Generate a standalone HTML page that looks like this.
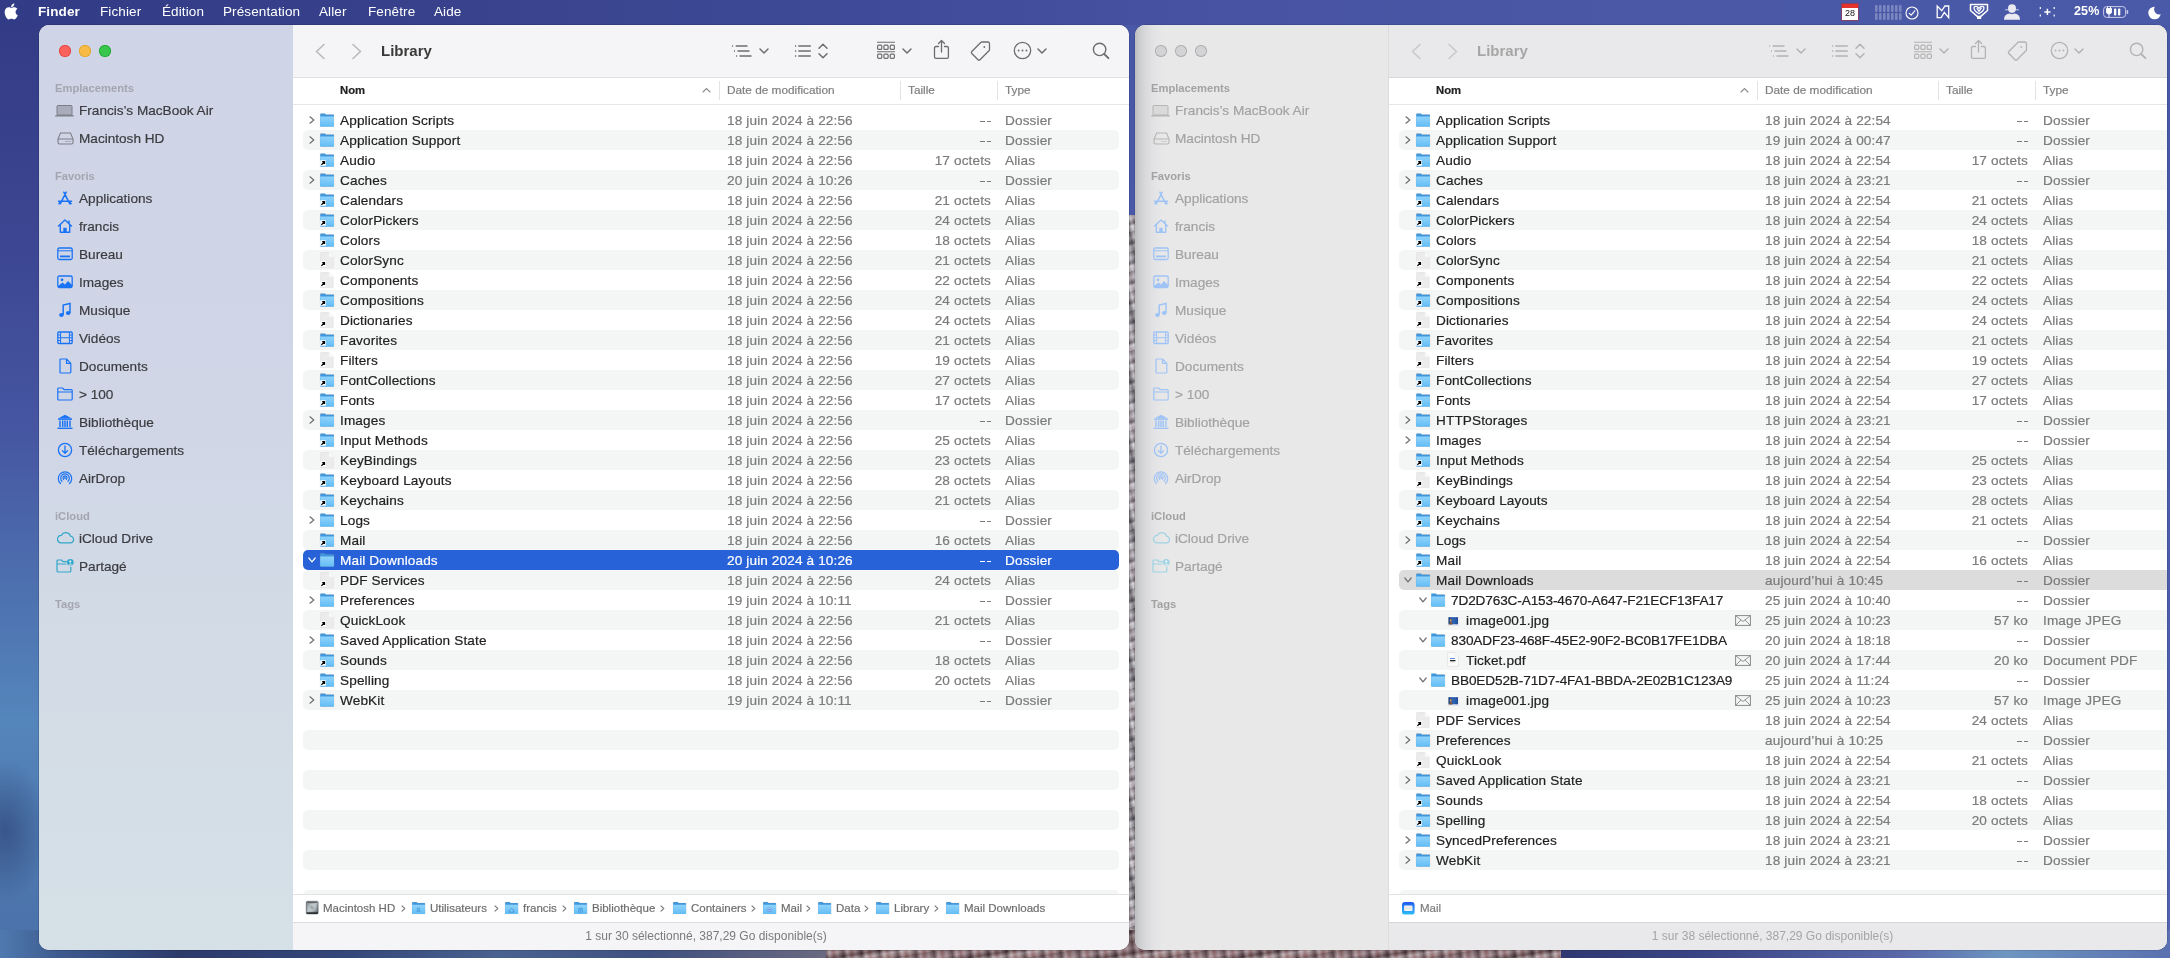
<!DOCTYPE html><html><head><meta charset="utf-8"><title>Finder</title><style>
*{margin:0;padding:0;box-sizing:border-box}
html,body{width:2170px;height:958px;overflow:hidden}
body{position:relative;font-family:"Liberation Sans", sans-serif;background:#4a6aa0;-webkit-font-smoothing:antialiased}
#root{position:absolute;left:0;top:0;width:2170px;height:958px;will-change:transform}
.t,.si,.pb,.hd{-webkit-text-stroke:0.2px currentColor}
.abs{position:absolute}
.ic{position:absolute;overflow:visible}
.t{position:absolute;height:20px;line-height:21.5px;font-size:13.6px;letter-spacing:0.13px;white-space:nowrap}
.r{text-align:right}
.stripe{position:absolute;height:20px;background:#f4f5f5}
.menu{position:absolute;left:0;top:0;width:2170px;height:25px;background:linear-gradient(90deg,#323c86 0%,#38428c 20%,#3f4b98 40%,#4753a2 55%,#4a58a6 75%,#4a5aa8 100%)}
.mi{position:absolute;top:0;height:23px;line-height:23px;font-size:13.5px;letter-spacing:0.12px;color:#fff}
.win{position:absolute;border-radius:10px;overflow:hidden}
.side{position:absolute;left:0;top:0;bottom:0}
.sh{position:absolute;font-size:11.2px;font-weight:bold;height:14px;line-height:14px}
.si{position:absolute;font-size:13.6px;height:20px;line-height:20px;white-space:nowrap}
.hd{position:absolute;font-size:11.8px;height:16px;line-height:16px;white-space:nowrap}
.pb{position:absolute;font-size:11.5px;height:16px;line-height:16px;white-space:nowrap;color:#6e6e6e}
</style></head><body><div id="root">
<svg width="0" height="0" style="position:absolute">
<defs>
<linearGradient id="fbody" x1="0" y1="0" x2="0" y2="1">
 <stop offset="0" stop-color="#8fd3fb"/><stop offset="1" stop-color="#62bdf5"/>
</linearGradient>
<linearGradient id="hdg" x1="0" y1="0" x2="0" y2="1">
 <stop offset="0" stop-color="#9a9a9a"/><stop offset="1" stop-color="#3a3a3a"/>
</linearGradient>
<symbol id="folder" viewBox="0 0 16 14">
 <path d="M1.2 1.2 Q1.2 0.5 1.9 0.5 H5.6 Q6.1 0.5 6.4 0.9 L6.9 1.6 H14.3 Q15 1.6 15 2.3 V12.8 Q15 13.5 14.3 13.5 H1.9 Q1.2 13.5 1.2 12.8 Z" fill="#3f97de" stroke="#b99a8a" stroke-opacity="0.35" stroke-width="0.5"/>
 <path d="M1.2 3.6 H15 V12.8 Q15 13.5 14.3 13.5 H1.9 Q1.2 13.5 1.2 12.8 Z" fill="url(#fbody)"/>
</symbol>
<symbol id="alias" viewBox="0 0 6 6">
 <rect x="0.2" y="0.2" width="5.6" height="5.6" fill="#fff" rx="0.4"/>
 <path d="M1.4 4.8 L4.2 2 M2.2 1.6 H4.5 V3.9" stroke="#000" stroke-width="1.2" fill="none"/>
</symbol>
<symbol id="doc" viewBox="0 0 16 18">
 <path d="M1.6 1.9 Q1.6 1.6 1.9 1.6 H10 L14.2 5.8 V16.3 Q14.2 16.6 13.9 16.6 H1.9 Q1.6 16.6 1.6 16.3 Z" fill="#ececec" stroke="#dedede" stroke-width="0.6"/>
 <path d="M10 1.6 V5 Q10 5.8 10.8 5.8 H14.2 Z" fill="#fbfbfb"/>
</symbol>
<symbol id="chev" viewBox="0 0 6 8">
 <path d="M1 0.8 L4.8 4 L1 7.2" fill="none" stroke="#6f6f6f" stroke-width="1.2" stroke-linecap="round" stroke-linejoin="round"/>
</symbol>
<symbol id="chevd" viewBox="0 0 8 6">
 <path d="M0.8 1 L4 4.8 L7.2 1" fill="none" stroke="#6f6f6f" stroke-width="1.2" stroke-linecap="round" stroke-linejoin="round"/>
</symbol>
<symbol id="envelope" viewBox="0 0 16 11">
 <rect x="0.6" y="0.6" width="14.8" height="9.8" fill="none" stroke="#8a8a8a" stroke-width="1"/>
 <path d="M0.6 0.6 L8 6.5 L15.4 0.6 M0.6 10.4 L6 5 M15.4 10.4 L10 5" fill="none" stroke="#8a8a8a" stroke-width="0.9"/>
</symbol>
<symbol id="imgicon" viewBox="0 0 13 10.5">
 <rect x="0.3" y="0.6" width="12.4" height="9.6" rx="0.6" fill="#9a9a9a" opacity="0.35"/>
 <rect x="0.3" y="0.2" width="12.4" height="9.6" rx="0.6" fill="#fff"/>
 <linearGradient id="imgg" x1="0" y1="0" x2="1" y2="0"><stop offset="0" stop-color="#1c3d7a"/><stop offset="0.5" stop-color="#2d66b8"/><stop offset="1" stop-color="#1f4d95"/></linearGradient>
 <rect x="1.4" y="1.2" width="10.2" height="7.6" fill="url(#imgg)"/>
 <ellipse cx="3.9" cy="4.6" rx="1" ry="1.5" fill="#c98a5a"/>
 <path d="M2 8.8 Q2.3 6.3 3.9 6.1 Q5.6 6.3 5.9 8.8 Z" fill="#7a5a40"/>
</symbol>
<symbol id="pdficon" viewBox="0 0 12 15">
 <path d="M0.6 0.6 H8 L11.4 4 V14.4 H0.6 Z" fill="#fbfbfb" stroke="#dcdcdc" stroke-width="0.6"/>
 <path d="M8 0.6 V4 H11.4" fill="#fff" stroke="#dcdcdc" stroke-width="0.5"/>
 <rect x="3" y="6" width="5" height="1" fill="#5a8de0"/>
 <rect x="3" y="8" width="5.5" height="1.2" fill="#222"/>
 <rect x="3.5" y="9.6" width="4" height="0.6" fill="#999"/>
</symbol>
</defs>
</svg>
<div class="abs" style="left:0;top:0;width:2170px;height:958px;background:linear-gradient(180deg,#323a84 0%,#3c4692 25%,#4656a2 45%,#4f76b2 65%,#5485bb 75%,#4a70a8 100%)"></div><div class="abs" style="left:-40px;top:760px;width:90px;height:140px;border-radius:50%;background:radial-gradient(closest-side,rgba(30,40,90,0.45),rgba(30,40,90,0))"></div><div class="abs" style="left:1090px;top:0;width:1080px;height:958px;background:linear-gradient(180deg,#4858a6 0%,#4d5caa 50%,#5363b0 100%)"></div><div class="abs" style="left:1100px;top:215px;width:60px;height:743px;background:repeating-linear-gradient(77deg,rgba(40,35,40,0.45) 0px,rgba(235,235,240,0.35) 4px,rgba(110,80,80,0.25) 7px,rgba(220,218,225,0.3) 11px,rgba(30,28,32,0.4) 16px),repeating-linear-gradient(-17deg,#a8a6ad 0px,#d6d4da 5px,#5d5660 8px,#c2bec6 13px,#7a7078 19px)"></div><div class="abs" style="left:0;top:930px;width:830px;height:28px;background:linear-gradient(90deg,#4f7ab0 0,#3d5a8e 60px,#2c3a6a 180px,#34477a 350px,#4a6290 500px,#3f5080 650px,#6b6a80 830px)"></div><div class="abs" style="left:1555px;top:930px;width:615px;height:28px;background:linear-gradient(90deg,#2e3770 0,#3a4585 150px,#5a68aa 350px,#6d96c0 450px,#5a70b0 615px)"></div><div class="abs" style="left:826px;top:930px;width:735px;height:28px;background:repeating-linear-gradient(83deg,rgba(40,25,30,0.4) 0px,rgba(225,215,220,0.35) 4px,rgba(130,80,80,0.35) 8px,rgba(200,190,195,0.3) 12px,rgba(35,25,30,0.45) 18px),repeating-linear-gradient(-9deg,#8a6a6c 0px,#b9a9ac 5px,#4e383c 9px,#a48c92 14px,#6e5458 21px)"></div><div class="menu"></div><div class="win" style="left:39px;top:25px;width:1090px;height:925px;background:#fff;box-shadow:0 0 0 0.5px rgba(0,0,0,0.25)"><div class="abs" style="left:0;top:0;width:254px;height:100%;background:linear-gradient(180deg,#cfd4e6 0%,#d0d6e6 45%,#d3dce6 70%,#d5e0e7 100%)"></div><div class="abs" style="left:254px;top:0;width:836px;height:53px;background:#f5f5f7;border-bottom:1px solid #e0e0e0"></div><div class="abs" style="left:254px;top:78.5px;width:836px;height:1px;background:#e6e6e6"></div></div><div class="abs" style="left:59px;top:45px;width:12px;height:12px;border-radius:50%;background:#fa625b;box-shadow:inset 0 0 0 0.8px #e0443e"></div><div class="abs" style="left:79px;top:45px;width:12px;height:12px;border-radius:50%;background:#f8bb45;box-shadow:inset 0 0 0 0.8px #dea123"></div><div class="abs" style="left:99px;top:45px;width:12px;height:12px;border-radius:50%;background:#38c74c;box-shadow:inset 0 0 0 0.8px #1ea52e"></div><svg class="ic" style="left:55px;top:104px" width="19" height="13" viewBox="0 0 19 13"><rect x="2" y="1.5" width="15" height="9.5" rx="0.8" fill="#a9acba" stroke="#7c7e86" stroke-width="1"/><path d="M0.3 11.8 H18.7" stroke="#7c7e86" stroke-width="1.4"/></svg><svg class="ic" style="left:57px;top:132px" width="17" height="13" viewBox="0 0 17 13"><path d="M3.5 1 H13.5 L16 7 V10.5 Q16 12 14.5 12 H2.5 Q1 12 1 10.5 V7 Z" fill="none" stroke="#7c7e86" stroke-width="1.1"/><path d="M1 7 H16" stroke="#7c7e86" stroke-width="1"/><circle cx="9" cy="9.5" r="0.6" fill="#7c7e86"/><circle cx="11" cy="9.5" r="0.6" fill="#7c7e86"/><circle cx="13" cy="9.5" r="0.6" fill="#7c7e86"/></svg><svg class="ic" style="left:57px;top:191px" width="16" height="15" viewBox="0 0 16 15"><path d="M9.2 1.2 L3.2 12.8 M6.8 1.2 L12.8 12.8 M1.5 10.2 H14.5 M2 12.6 L3 11.6 M14 12.6 L13 11.6" fill="none" stroke="#1a73f5" stroke-width="1.5" stroke-linecap="round"/></svg><svg class="ic" style="left:57px;top:218px" width="16" height="16" viewBox="0 0 16 16"><path d="M1.5 8 L8 2 L14.5 8 M3.3 6.5 V14.3 H12.7 V6.5 M12 3 V5.5" fill="none" stroke="#1a73f5" stroke-width="1.4" stroke-linejoin="round" stroke-linecap="round"/><rect x="6.3" y="9.8" width="3.4" height="4.5" fill="#1a73f5"/></svg><svg class="ic" style="left:57px;top:247px" width="16" height="14" viewBox="0 0 16 14"><rect x="0.8" y="1" width="14.4" height="11.5" rx="1.5" fill="none" stroke="#1a73f5" stroke-width="1.3"/><path d="M0.8 3.8 H15.2" stroke="#1a73f5" stroke-width="1"/><rect x="3" y="8.5" width="10" height="1.8" fill="#1a73f5"/></svg><svg class="ic" style="left:57px;top:275px" width="16" height="14" viewBox="0 0 16 14"><rect x="0.8" y="1" width="14.4" height="11.5" rx="1.5" fill="none" stroke="#1a73f5" stroke-width="1.3"/><circle cx="5" cy="4.8" r="1.4" fill="#1a73f5"/><path d="M1 11 L5.5 7.5 L8 9.5 L11 6 L15 10 V12.5 H1 Z" fill="#1a73f5"/></svg><svg class="ic" style="left:58px;top:302px" width="14" height="16" viewBox="0 0 14 16"><path d="M5.2 13 V3 L12 1.5 V11" fill="none" stroke="#1a73f5" stroke-width="1.5"/><ellipse cx="3.4" cy="13" rx="2.3" ry="1.9" fill="#1a73f5"/><ellipse cx="10.2" cy="11" rx="2.3" ry="1.9" fill="#1a73f5"/></svg><svg class="ic" style="left:57px;top:331px" width="16" height="14" viewBox="0 0 16 14"><rect x="0.8" y="1" width="14.4" height="11.5" rx="1" fill="none" stroke="#1a73f5" stroke-width="1.3"/><path d="M3.6 1 V12.5 M12.4 1 V12.5 M3.6 6.75 H12.4 M0.8 4 H3.6 M0.8 6.75 H3.6 M0.8 9.5 H3.6 M12.4 4 H15.2 M12.4 6.75 H15.2 M12.4 9.5 H15.2" stroke="#1a73f5" stroke-width="1"/></svg><svg class="ic" style="left:59px;top:358px" width="13" height="16" viewBox="0 0 13 16"><path d="M1 2 Q1 1 2 1 H7.5 L11.8 5.3 V14 Q11.8 15 10.8 15 H2 Q1 15 1 14 Z M7.5 1 V5.3 H11.8" fill="none" stroke="#1a73f5" stroke-width="1.2" stroke-linejoin="round"/></svg><svg class="ic" style="left:57px;top:387px" width="16" height="14" viewBox="0 0 16 14"><path d="M0.8 2 Q0.8 1 1.8 1 H5.5 L7 2.6 H14.2 Q15.2 2.6 15.2 3.6 V12 Q15.2 13 14.2 13 H1.8 Q0.8 13 0.8 12 Z M0.8 5 H15.2" fill="none" stroke="#1a73f5" stroke-width="1.2" stroke-linejoin="round"/></svg><svg class="ic" style="left:57px;top:414px" width="16" height="16" viewBox="0 0 16 16"><path d="M8 0.8 L15 4.5 H1 Z" fill="#1a73f5"/><rect x="1" y="4.5" width="14" height="1.4" fill="#1a73f5"/><path d="M3 6.5 V13 M5.7 6.5 V13 M8 6.5 V13 M10.3 6.5 V13 M13 6.5 V13" stroke="#1a73f5" stroke-width="1.5"/><rect x="0.5" y="13.6" width="15" height="1.4" fill="#1a73f5"/></svg><svg class="ic" style="left:57px;top:442px" width="16" height="16" viewBox="0 0 16 16"><circle cx="8" cy="8" r="6.6" fill="none" stroke="#1a73f5" stroke-width="1.3"/><path d="M8 4 V11 M5.3 8.6 L8 11.3 L10.7 8.6" fill="none" stroke="#1a73f5" stroke-width="1.3" stroke-linecap="round" stroke-linejoin="round"/></svg><svg class="ic" style="left:57px;top:470px" width="16" height="16" viewBox="0 0 16 16"><path d="M3.5 13.5 A6.7 6.7 0 1 1 12.5 13.5 M5 11.3 A4.3 4.3 0 1 1 11 11.3 M6.6 9.3 A2 2 0 1 1 9.4 9.3" fill="none" stroke="#1a73f5" stroke-width="1.2" stroke-linecap="round"/><circle cx="8" cy="8" r="0.9" fill="#1a73f5"/></svg><svg class="ic" style="left:56px;top:531px" width="18" height="13" viewBox="0 0 18 13"><path d="M4.5 11.8 H14 A3.3 3.3 0 0 0 14.5 5.2 A4.8 4.8 0 0 0 5.5 4.3 A3.8 3.8 0 0 0 4.5 11.8 Z" fill="none" stroke="#33a7c9" stroke-width="1.2"/></svg><svg class="ic" style="left:56px;top:558px" width="18" height="15" viewBox="0 0 18 15"><path d="M10.8 3.6 H7 L5.5 2 H2 Q1 2 1 3 V13 Q1 14 2 14 H13.8 Q14.8 14 14.8 13 V8.8 M1 6 H10.5" fill="none" stroke="#33a7c9" stroke-width="1.2" stroke-linejoin="round"/><circle cx="14.3" cy="4.3" r="3.3" fill="#33a7c9"/><circle cx="14.3" cy="3.4" r="1" fill="#fff"/><path d="M12.6 6.5 Q14.3 4.6 16 6.5" fill="#fff"/></svg><div class="sh" style="left:55px;top:81px;color:#a3a6b0">Emplacements</div><div class="sh" style="left:55px;top:169px;color:#a3a6b0">Favoris</div><div class="sh" style="left:55px;top:509px;color:#a3a6b0">iCloud</div><div class="sh" style="left:55px;top:597px;color:#a3a6b0">Tags</div><div class="si" style="left:79px;top:101px;color:#3b3c40">Francis’s MacBook Air</div><div class="si" style="left:79px;top:129px;color:#3b3c40">Macintosh HD</div><div class="si" style="left:79px;top:189px;color:#3b3c40">Applications</div><div class="si" style="left:79px;top:217px;color:#3b3c40">francis</div><div class="si" style="left:79px;top:245px;color:#3b3c40">Bureau</div><div class="si" style="left:79px;top:273px;color:#3b3c40">Images</div><div class="si" style="left:79px;top:301px;color:#3b3c40">Musique</div><div class="si" style="left:79px;top:329px;color:#3b3c40">Vidéos</div><div class="si" style="left:79px;top:357px;color:#3b3c40">Documents</div><div class="si" style="left:79px;top:385px;color:#3b3c40">&gt; 100</div><div class="si" style="left:79px;top:413px;color:#3b3c40">Bibliothèque</div><div class="si" style="left:79px;top:441px;color:#3b3c40">Téléchargements</div><div class="si" style="left:79px;top:469px;color:#3b3c40">AirDrop</div><div class="si" style="left:79px;top:529px;color:#3b3c40">iCloud Drive</div><div class="si" style="left:79px;top:557px;color:#3b3c40">Partagé</div><svg class="ic" style="left:314px;top:43px" width="12" height="17" viewBox="0 0 12 17"><path d="M10 1.5 L2.5 8.5 L10 15.5" fill="none" stroke="#b9b9b9" stroke-width="1.6" stroke-linecap="round" stroke-linejoin="round"/></svg><svg class="ic" style="left:351px;top:43px" width="12" height="17" viewBox="0 0 12 17"><path d="M2 1.5 L9.5 8.5 L2 15.5" fill="none" stroke="#b9b9b9" stroke-width="1.6" stroke-linecap="round" stroke-linejoin="round"/></svg><div class="abs" style="left:381px;top:40px;height:22px;line-height:22px;font-size:15px;font-weight:bold;color:#3a3a3a">Library</div><svg class="ic" style="left:730px;top:44px" width="24" height="14" viewBox="0 0 24 14"><path d="M2 2 H3 M4 7 H5 M6 12 H7" stroke="#6d6d6d" stroke-width="1.5"/><path d="M5.7 2 H17.5 M7.5 7 H19.5 M9.5 12 H21.5" stroke="#6d6d6d" stroke-width="1.4"/></svg><svg class="ic" style="left:759px;top:48px" width="10" height="6" viewBox="0 0 10 6"><path d="M1 1 L5 5 L9 1" fill="none" stroke="#6d6d6d" stroke-width="1.5" stroke-linecap="round" stroke-linejoin="round"/></svg><svg class="ic" style="left:793px;top:44px" width="20" height="14" viewBox="0 0 20 14"><path d="M2 2 H3.2 M2 7 H3.2 M2 12 H3.2" stroke="#6d6d6d" stroke-width="1.5"/><path d="M5.3 2 H17.8 M5.3 7 H17.8 M5.3 12 H17.8" stroke="#6d6d6d" stroke-width="1.4"/></svg><svg class="ic" style="left:818px;top:43px" width="10" height="16" viewBox="0 0 10 16"><path d="M1 5.3 L5 1.3 L9 5.3 M1 10.7 L5 14.7 L9 10.7" fill="none" stroke="#6d6d6d" stroke-width="1.5" stroke-linecap="round" stroke-linejoin="round"/></svg><svg class="ic" style="left:876px;top:41px" width="20" height="19" viewBox="0 0 20 19"><path d="M1 1.2 H19 M1 10.7 H19" stroke="#6d6d6d" stroke-width="1.1"/><g fill="none" stroke="#6d6d6d" stroke-width="1.2"><rect x="1.6" y="4.2" width="4.2" height="4.2" rx="1"/><rect x="7.9" y="4.2" width="4.2" height="4.2" rx="1"/><rect x="14.2" y="4.2" width="4.2" height="4.2" rx="1"/><rect x="1.6" y="13.1" width="4.2" height="4.2" rx="1"/><rect x="7.9" y="13.1" width="4.2" height="4.2" rx="1"/><rect x="14.2" y="13.1" width="4.2" height="4.2" rx="1"/></g></svg><svg class="ic" style="left:902px;top:48px" width="10" height="6" viewBox="0 0 10 6"><path d="M1 1 L5 5 L9 1" fill="none" stroke="#6d6d6d" stroke-width="1.5" stroke-linecap="round" stroke-linejoin="round"/></svg><svg class="ic" style="left:933px;top:39px" width="17" height="21" viewBox="0 0 17 21"><path d="M5.5 7.5 H3 Q1.5 7.5 1.5 9 V18 Q1.5 19.4 3 19.4 H14 Q15.4 19.4 15.4 18 V9 Q15.4 7.5 14 7.5 H11.5" fill="none" stroke="#6d6d6d" stroke-width="1.3" stroke-linecap="round"/><path d="M8.5 13 V1.5 M5.5 4.5 L8.5 1.5 L11.5 4.5" fill="none" stroke="#6d6d6d" stroke-width="1.3" stroke-linecap="round" stroke-linejoin="round"/></svg><svg class="ic" style="left:970px;top:41px" width="21" height="21" viewBox="0 0 21 21"><path d="M1.8 10.5 L11 1.3 Q11.3 1 11.8 1 H17.8 Q19.5 1 19.5 2.7 V8.7 Q19.5 9.2 19.2 9.5 L10 18.7 Q9 19.7 8 18.7 L1.8 12.5 Q0.8 11.5 1.8 10.5 Z" fill="none" stroke="#6d6d6d" stroke-width="1.3" stroke-linejoin="round"/><circle cx="14.3" cy="6" r="0.9" fill="#6d6d6d"/></svg><svg class="ic" style="left:1013px;top:41px" width="19" height="19" viewBox="0 0 19 19"><circle cx="9.5" cy="9.5" r="8.2" fill="none" stroke="#6d6d6d" stroke-width="1.3"/><circle cx="5.6" cy="9.5" r="0.95" fill="#6d6d6d"/><circle cx="9.5" cy="9.5" r="0.95" fill="#6d6d6d"/><circle cx="13.4" cy="9.5" r="0.95" fill="#6d6d6d"/></svg><svg class="ic" style="left:1037px;top:48px" width="10" height="6" viewBox="0 0 10 6"><path d="M1 1 L5 5 L9 1" fill="none" stroke="#6d6d6d" stroke-width="1.5" stroke-linecap="round" stroke-linejoin="round"/></svg><svg class="ic" style="left:1092px;top:42px" width="18" height="18" viewBox="0 0 18 18"><circle cx="7.6" cy="7.4" r="6.2" fill="none" stroke="#6d6d6d" stroke-width="1.4"/><path d="M12.2 12 L16.4 16.2" stroke="#6d6d6d" stroke-width="1.9" stroke-linecap="round"/></svg><div class="hd" style="left:340px;top:82px;font-weight:bold;color:#222;font-size:11.3px">Nom</div><svg class="ic" style="left:702px;top:87px" width="9" height="6" viewBox="0 0 9 6"><path d="M1 5 L4.5 1.5 L8 5" fill="none" stroke="#8a8a8a" stroke-width="1.1" stroke-linecap="round"/></svg><div class="abs" style="left:719px;top:81px;width:1px;height:19px;background:#e3e3e3"></div><div class="abs" style="left:900px;top:81px;width:1px;height:19px;background:#e3e3e3"></div><div class="abs" style="left:997px;top:81px;width:1px;height:19px;background:#e3e3e3"></div><div class="hd" style="left:727px;top:82px;color:#7f7f7f">Date de modification</div><div class="hd" style="left:908px;top:82px;color:#7f7f7f">Taille</div><div class="hd" style="left:1005px;top:82px;color:#7f7f7f">Type</div><svg class="ic" style="left:309px;top:116px" width="6" height="8"><use href="#chev" /></svg><svg class="ic" style="left:319px;top:113px" width="16" height="14"><use href="#folder"/></svg><div class="t" style="left:340px;top:110px;color:#222">Application Scripts</div><div class="t" style="left:727px;top:110px;color:#7b7b7b">18 juin 2024 à 22:56</div><div class="abs" style="left:979.5px;top:120.6px;width:11.5px;height:1.3px;background:linear-gradient(90deg,#7b7b7b 0 4.6px,transparent 4.6px 6.8px,#7b7b7b 6.8px)"></div><div class="t" style="left:1005px;top:110px;color:#7b7b7b">Dossier</div><div class="stripe" style="left:303px;top:130px;width:816px;border-radius:5px"></div><svg class="ic" style="left:309px;top:136px" width="6" height="8"><use href="#chev" /></svg><svg class="ic" style="left:319px;top:133px" width="16" height="14"><use href="#folder"/></svg><div class="t" style="left:340px;top:130px;color:#222">Application Support</div><div class="t" style="left:727px;top:130px;color:#7b7b7b">18 juin 2024 à 22:56</div><div class="abs" style="left:979.5px;top:140.6px;width:11.5px;height:1.3px;background:linear-gradient(90deg,#7b7b7b 0 4.6px,transparent 4.6px 6.8px,#7b7b7b 6.8px)"></div><div class="t" style="left:1005px;top:130px;color:#7b7b7b">Dossier</div><svg class="ic" style="left:319px;top:153px" width="16" height="14"><use href="#folder"/></svg><svg class="ic" style="left:320px;top:160px" width="6" height="6"><use href="#alias"/></svg><div class="t" style="left:340px;top:150px;color:#222">Audio</div><div class="t" style="left:727px;top:150px;color:#7b7b7b">18 juin 2024 à 22:56</div><div class="t r" style="right:1179px;top:150px;color:#7b7b7b">17 octets</div><div class="t" style="left:1005px;top:150px;color:#7b7b7b">Alias</div><div class="stripe" style="left:303px;top:170px;width:816px;border-radius:5px"></div><svg class="ic" style="left:309px;top:176px" width="6" height="8"><use href="#chev" /></svg><svg class="ic" style="left:319px;top:173px" width="16" height="14"><use href="#folder"/></svg><div class="t" style="left:340px;top:170px;color:#222">Caches</div><div class="t" style="left:727px;top:170px;color:#7b7b7b">20 juin 2024 à 10:26</div><div class="abs" style="left:979.5px;top:180.6px;width:11.5px;height:1.3px;background:linear-gradient(90deg,#7b7b7b 0 4.6px,transparent 4.6px 6.8px,#7b7b7b 6.8px)"></div><div class="t" style="left:1005px;top:170px;color:#7b7b7b">Dossier</div><svg class="ic" style="left:319px;top:193px" width="16" height="14"><use href="#folder"/></svg><svg class="ic" style="left:320px;top:200px" width="6" height="6"><use href="#alias"/></svg><div class="t" style="left:340px;top:190px;color:#222">Calendars</div><div class="t" style="left:727px;top:190px;color:#7b7b7b">18 juin 2024 à 22:56</div><div class="t r" style="right:1179px;top:190px;color:#7b7b7b">21 octets</div><div class="t" style="left:1005px;top:190px;color:#7b7b7b">Alias</div><div class="stripe" style="left:303px;top:210px;width:816px;border-radius:5px"></div><svg class="ic" style="left:319px;top:213px" width="16" height="14"><use href="#folder"/></svg><svg class="ic" style="left:320px;top:220px" width="6" height="6"><use href="#alias"/></svg><div class="t" style="left:340px;top:210px;color:#222">ColorPickers</div><div class="t" style="left:727px;top:210px;color:#7b7b7b">18 juin 2024 à 22:56</div><div class="t r" style="right:1179px;top:210px;color:#7b7b7b">24 octets</div><div class="t" style="left:1005px;top:210px;color:#7b7b7b">Alias</div><svg class="ic" style="left:319px;top:233px" width="16" height="14"><use href="#folder"/></svg><svg class="ic" style="left:320px;top:240px" width="6" height="6"><use href="#alias"/></svg><div class="t" style="left:340px;top:230px;color:#222">Colors</div><div class="t" style="left:727px;top:230px;color:#7b7b7b">18 juin 2024 à 22:56</div><div class="t r" style="right:1179px;top:230px;color:#7b7b7b">18 octets</div><div class="t" style="left:1005px;top:230px;color:#7b7b7b">Alias</div><div class="stripe" style="left:303px;top:250px;width:816px;border-radius:5px"></div><svg class="ic" style="left:319px;top:251px" width="16" height="18"><use href="#doc"/></svg><svg class="ic" style="left:319.5px;top:261px" width="6" height="6"><use href="#alias"/></svg><div class="t" style="left:340px;top:250px;color:#222">ColorSync</div><div class="t" style="left:727px;top:250px;color:#7b7b7b">18 juin 2024 à 22:56</div><div class="t r" style="right:1179px;top:250px;color:#7b7b7b">21 octets</div><div class="t" style="left:1005px;top:250px;color:#7b7b7b">Alias</div><svg class="ic" style="left:319px;top:271px" width="16" height="18"><use href="#doc"/></svg><svg class="ic" style="left:319.5px;top:281px" width="6" height="6"><use href="#alias"/></svg><div class="t" style="left:340px;top:270px;color:#222">Components</div><div class="t" style="left:727px;top:270px;color:#7b7b7b">18 juin 2024 à 22:56</div><div class="t r" style="right:1179px;top:270px;color:#7b7b7b">22 octets</div><div class="t" style="left:1005px;top:270px;color:#7b7b7b">Alias</div><div class="stripe" style="left:303px;top:290px;width:816px;border-radius:5px"></div><svg class="ic" style="left:319px;top:293px" width="16" height="14"><use href="#folder"/></svg><svg class="ic" style="left:320px;top:300px" width="6" height="6"><use href="#alias"/></svg><div class="t" style="left:340px;top:290px;color:#222">Compositions</div><div class="t" style="left:727px;top:290px;color:#7b7b7b">18 juin 2024 à 22:56</div><div class="t r" style="right:1179px;top:290px;color:#7b7b7b">24 octets</div><div class="t" style="left:1005px;top:290px;color:#7b7b7b">Alias</div><svg class="ic" style="left:319px;top:311px" width="16" height="18"><use href="#doc"/></svg><svg class="ic" style="left:319.5px;top:321px" width="6" height="6"><use href="#alias"/></svg><div class="t" style="left:340px;top:310px;color:#222">Dictionaries</div><div class="t" style="left:727px;top:310px;color:#7b7b7b">18 juin 2024 à 22:56</div><div class="t r" style="right:1179px;top:310px;color:#7b7b7b">24 octets</div><div class="t" style="left:1005px;top:310px;color:#7b7b7b">Alias</div><div class="stripe" style="left:303px;top:330px;width:816px;border-radius:5px"></div><svg class="ic" style="left:319px;top:333px" width="16" height="14"><use href="#folder"/></svg><svg class="ic" style="left:320px;top:340px" width="6" height="6"><use href="#alias"/></svg><div class="t" style="left:340px;top:330px;color:#222">Favorites</div><div class="t" style="left:727px;top:330px;color:#7b7b7b">18 juin 2024 à 22:56</div><div class="t r" style="right:1179px;top:330px;color:#7b7b7b">21 octets</div><div class="t" style="left:1005px;top:330px;color:#7b7b7b">Alias</div><svg class="ic" style="left:319px;top:351px" width="16" height="18"><use href="#doc"/></svg><svg class="ic" style="left:319.5px;top:361px" width="6" height="6"><use href="#alias"/></svg><div class="t" style="left:340px;top:350px;color:#222">Filters</div><div class="t" style="left:727px;top:350px;color:#7b7b7b">18 juin 2024 à 22:56</div><div class="t r" style="right:1179px;top:350px;color:#7b7b7b">19 octets</div><div class="t" style="left:1005px;top:350px;color:#7b7b7b">Alias</div><div class="stripe" style="left:303px;top:370px;width:816px;border-radius:5px"></div><svg class="ic" style="left:319px;top:373px" width="16" height="14"><use href="#folder"/></svg><svg class="ic" style="left:320px;top:380px" width="6" height="6"><use href="#alias"/></svg><div class="t" style="left:340px;top:370px;color:#222">FontCollections</div><div class="t" style="left:727px;top:370px;color:#7b7b7b">18 juin 2024 à 22:56</div><div class="t r" style="right:1179px;top:370px;color:#7b7b7b">27 octets</div><div class="t" style="left:1005px;top:370px;color:#7b7b7b">Alias</div><svg class="ic" style="left:319px;top:393px" width="16" height="14"><use href="#folder"/></svg><svg class="ic" style="left:320px;top:400px" width="6" height="6"><use href="#alias"/></svg><div class="t" style="left:340px;top:390px;color:#222">Fonts</div><div class="t" style="left:727px;top:390px;color:#7b7b7b">18 juin 2024 à 22:56</div><div class="t r" style="right:1179px;top:390px;color:#7b7b7b">17 octets</div><div class="t" style="left:1005px;top:390px;color:#7b7b7b">Alias</div><div class="stripe" style="left:303px;top:410px;width:816px;border-radius:5px"></div><svg class="ic" style="left:309px;top:416px" width="6" height="8"><use href="#chev" /></svg><svg class="ic" style="left:319px;top:413px" width="16" height="14"><use href="#folder"/></svg><div class="t" style="left:340px;top:410px;color:#222">Images</div><div class="t" style="left:727px;top:410px;color:#7b7b7b">18 juin 2024 à 22:56</div><div class="abs" style="left:979.5px;top:420.6px;width:11.5px;height:1.3px;background:linear-gradient(90deg,#7b7b7b 0 4.6px,transparent 4.6px 6.8px,#7b7b7b 6.8px)"></div><div class="t" style="left:1005px;top:410px;color:#7b7b7b">Dossier</div><svg class="ic" style="left:319px;top:433px" width="16" height="14"><use href="#folder"/></svg><svg class="ic" style="left:320px;top:440px" width="6" height="6"><use href="#alias"/></svg><div class="t" style="left:340px;top:430px;color:#222">Input Methods</div><div class="t" style="left:727px;top:430px;color:#7b7b7b">18 juin 2024 à 22:56</div><div class="t r" style="right:1179px;top:430px;color:#7b7b7b">25 octets</div><div class="t" style="left:1005px;top:430px;color:#7b7b7b">Alias</div><div class="stripe" style="left:303px;top:450px;width:816px;border-radius:5px"></div><svg class="ic" style="left:319px;top:451px" width="16" height="18"><use href="#doc"/></svg><svg class="ic" style="left:319.5px;top:461px" width="6" height="6"><use href="#alias"/></svg><div class="t" style="left:340px;top:450px;color:#222">KeyBindings</div><div class="t" style="left:727px;top:450px;color:#7b7b7b">18 juin 2024 à 22:56</div><div class="t r" style="right:1179px;top:450px;color:#7b7b7b">23 octets</div><div class="t" style="left:1005px;top:450px;color:#7b7b7b">Alias</div><svg class="ic" style="left:319px;top:473px" width="16" height="14"><use href="#folder"/></svg><svg class="ic" style="left:320px;top:480px" width="6" height="6"><use href="#alias"/></svg><div class="t" style="left:340px;top:470px;color:#222">Keyboard Layouts</div><div class="t" style="left:727px;top:470px;color:#7b7b7b">18 juin 2024 à 22:56</div><div class="t r" style="right:1179px;top:470px;color:#7b7b7b">28 octets</div><div class="t" style="left:1005px;top:470px;color:#7b7b7b">Alias</div><div class="stripe" style="left:303px;top:490px;width:816px;border-radius:5px"></div><svg class="ic" style="left:319px;top:493px" width="16" height="14"><use href="#folder"/></svg><svg class="ic" style="left:320px;top:500px" width="6" height="6"><use href="#alias"/></svg><div class="t" style="left:340px;top:490px;color:#222">Keychains</div><div class="t" style="left:727px;top:490px;color:#7b7b7b">18 juin 2024 à 22:56</div><div class="t r" style="right:1179px;top:490px;color:#7b7b7b">21 octets</div><div class="t" style="left:1005px;top:490px;color:#7b7b7b">Alias</div><svg class="ic" style="left:309px;top:516px" width="6" height="8"><use href="#chev" /></svg><svg class="ic" style="left:319px;top:513px" width="16" height="14"><use href="#folder"/></svg><div class="t" style="left:340px;top:510px;color:#222">Logs</div><div class="t" style="left:727px;top:510px;color:#7b7b7b">18 juin 2024 à 22:56</div><div class="abs" style="left:979.5px;top:520.6px;width:11.5px;height:1.3px;background:linear-gradient(90deg,#7b7b7b 0 4.6px,transparent 4.6px 6.8px,#7b7b7b 6.8px)"></div><div class="t" style="left:1005px;top:510px;color:#7b7b7b">Dossier</div><div class="stripe" style="left:303px;top:530px;width:816px;border-radius:5px"></div><svg class="ic" style="left:319px;top:533px" width="16" height="14"><use href="#folder"/></svg><svg class="ic" style="left:320px;top:540px" width="6" height="6"><use href="#alias"/></svg><div class="t" style="left:340px;top:530px;color:#222">Mail</div><div class="t" style="left:727px;top:530px;color:#7b7b7b">18 juin 2024 à 22:56</div><div class="t r" style="right:1179px;top:530px;color:#7b7b7b">16 octets</div><div class="t" style="left:1005px;top:530px;color:#7b7b7b">Alias</div><div class="stripe" style="left:303px;top:550px;width:816px;background:#2862d8;border-radius:5px"></div><svg class="ic" style="left:308px;top:557px" width="8" height="6" viewBox="0 0 8 6"><path d="M0.8 1 L4 4.8 L7.2 1" fill="none" stroke="#fff" stroke-width="1.2" stroke-linecap="round" stroke-linejoin="round"/></svg><svg class="ic" style="left:319px;top:553px" width="16" height="14"><use href="#folder"/></svg><div class="t" style="left:340px;top:550px;color:#fff">Mail Downloads</div><div class="t" style="left:727px;top:550px;color:#fff">20 juin 2024 à 10:26</div><div class="abs" style="left:979.5px;top:560.6px;width:11.5px;height:1.3px;background:linear-gradient(90deg,#fff 0 4.6px,transparent 4.6px 6.8px,#fff 6.8px)"></div><div class="t" style="left:1005px;top:550px;color:#fff">Dossier</div><div class="stripe" style="left:303px;top:570px;width:816px;border-radius:5px"></div><svg class="ic" style="left:319px;top:571px" width="16" height="18"><use href="#doc"/></svg><svg class="ic" style="left:319.5px;top:581px" width="6" height="6"><use href="#alias"/></svg><div class="t" style="left:340px;top:570px;color:#222">PDF Services</div><div class="t" style="left:727px;top:570px;color:#7b7b7b">18 juin 2024 à 22:56</div><div class="t r" style="right:1179px;top:570px;color:#7b7b7b">24 octets</div><div class="t" style="left:1005px;top:570px;color:#7b7b7b">Alias</div><svg class="ic" style="left:309px;top:596px" width="6" height="8"><use href="#chev" /></svg><svg class="ic" style="left:319px;top:593px" width="16" height="14"><use href="#folder"/></svg><div class="t" style="left:340px;top:590px;color:#222">Preferences</div><div class="t" style="left:727px;top:590px;color:#7b7b7b">19 juin 2024 à 10:11</div><div class="abs" style="left:979.5px;top:600.6px;width:11.5px;height:1.3px;background:linear-gradient(90deg,#7b7b7b 0 4.6px,transparent 4.6px 6.8px,#7b7b7b 6.8px)"></div><div class="t" style="left:1005px;top:590px;color:#7b7b7b">Dossier</div><div class="stripe" style="left:303px;top:610px;width:816px;border-radius:5px"></div><svg class="ic" style="left:319px;top:611px" width="16" height="18"><use href="#doc"/></svg><svg class="ic" style="left:319.5px;top:621px" width="6" height="6"><use href="#alias"/></svg><div class="t" style="left:340px;top:610px;color:#222">QuickLook</div><div class="t" style="left:727px;top:610px;color:#7b7b7b">18 juin 2024 à 22:56</div><div class="t r" style="right:1179px;top:610px;color:#7b7b7b">21 octets</div><div class="t" style="left:1005px;top:610px;color:#7b7b7b">Alias</div><svg class="ic" style="left:309px;top:636px" width="6" height="8"><use href="#chev" /></svg><svg class="ic" style="left:319px;top:633px" width="16" height="14"><use href="#folder"/></svg><div class="t" style="left:340px;top:630px;color:#222">Saved Application State</div><div class="t" style="left:727px;top:630px;color:#7b7b7b">18 juin 2024 à 22:56</div><div class="abs" style="left:979.5px;top:640.6px;width:11.5px;height:1.3px;background:linear-gradient(90deg,#7b7b7b 0 4.6px,transparent 4.6px 6.8px,#7b7b7b 6.8px)"></div><div class="t" style="left:1005px;top:630px;color:#7b7b7b">Dossier</div><div class="stripe" style="left:303px;top:650px;width:816px;border-radius:5px"></div><svg class="ic" style="left:319px;top:653px" width="16" height="14"><use href="#folder"/></svg><svg class="ic" style="left:320px;top:660px" width="6" height="6"><use href="#alias"/></svg><div class="t" style="left:340px;top:650px;color:#222">Sounds</div><div class="t" style="left:727px;top:650px;color:#7b7b7b">18 juin 2024 à 22:56</div><div class="t r" style="right:1179px;top:650px;color:#7b7b7b">18 octets</div><div class="t" style="left:1005px;top:650px;color:#7b7b7b">Alias</div><svg class="ic" style="left:319px;top:673px" width="16" height="14"><use href="#folder"/></svg><svg class="ic" style="left:320px;top:680px" width="6" height="6"><use href="#alias"/></svg><div class="t" style="left:340px;top:670px;color:#222">Spelling</div><div class="t" style="left:727px;top:670px;color:#7b7b7b">18 juin 2024 à 22:56</div><div class="t r" style="right:1179px;top:670px;color:#7b7b7b">20 octets</div><div class="t" style="left:1005px;top:670px;color:#7b7b7b">Alias</div><div class="stripe" style="left:303px;top:690px;width:816px;border-radius:5px"></div><svg class="ic" style="left:309px;top:696px" width="6" height="8"><use href="#chev" /></svg><svg class="ic" style="left:319px;top:693px" width="16" height="14"><use href="#folder"/></svg><div class="t" style="left:340px;top:690px;color:#222">WebKit</div><div class="t" style="left:727px;top:690px;color:#7b7b7b">19 juin 2024 à 10:11</div><div class="abs" style="left:979.5px;top:700.6px;width:11.5px;height:1.3px;background:linear-gradient(90deg,#7b7b7b 0 4.6px,transparent 4.6px 6.8px,#7b7b7b 6.8px)"></div><div class="t" style="left:1005px;top:690px;color:#7b7b7b">Dossier</div><div class="stripe" style="left:303px;top:730px;width:816px;border-radius:5px"></div><div class="stripe" style="left:303px;top:770px;width:816px;border-radius:5px"></div><div class="stripe" style="left:303px;top:810px;width:816px;border-radius:5px"></div><div class="stripe" style="left:303px;top:850px;width:816px;border-radius:5px"></div><div class="stripe" style="left:303px;top:890px;width:816px;border-radius:5px"></div><div class="abs" style="left:293px;top:894px;width:836px;height:28px;background:#fff;border-top:1px solid #e3e3e3"></div><div class="abs" style="left:293px;top:922px;width:836px;height:28px;background:#f5f5f7;border-top:1px solid #dcdcdc;border-bottom-right-radius:10px"></div><div class="abs" style="left:283px;top:922px;width:846px;height:28px;line-height:28px;text-align:center;font-size:12px;color:#7a7a7a">1 sur 30 sélectionné, 387,29 Go disponible(s)</div><div class="win" style="left:1135px;top:25px;width:1032px;height:925px;background:#fff;box-shadow:0 0 0 0.5px rgba(0,0,0,0.2)"><div class="abs" style="left:0;top:0;width:254px;height:100%;background:linear-gradient(90deg,#bdbdbf 0px,#cecfd1 5px,#dadadc 11px,#e3e3e5 19px,#e8e8e9 28px)"></div><div class="abs" style="left:254px;top:0;width:778px;height:53px;background:#e9e9eb;border-bottom:1px solid #d9d9d9"></div><div class="abs" style="left:253px;top:0;width:1px;height:100%;background:#dcdcdc"></div><div class="abs" style="left:254px;top:78.5px;width:778px;height:1px;background:#e6e6e6"></div></div><div class="abs" style="left:1155px;top:45px;width:12px;height:12px;border-radius:50%;background:#d3d3d5;box-shadow:inset 0 0 0 0.9px #aeaeb0"></div><div class="abs" style="left:1175px;top:45px;width:12px;height:12px;border-radius:50%;background:#d3d3d5;box-shadow:inset 0 0 0 0.9px #aeaeb0"></div><div class="abs" style="left:1195px;top:45px;width:12px;height:12px;border-radius:50%;background:#d3d3d5;box-shadow:inset 0 0 0 0.9px #aeaeb0"></div><svg class="ic" style="left:1151px;top:104px" width="19" height="13" viewBox="0 0 19 13"><rect x="2" y="1.5" width="15" height="9.5" rx="0.8" fill="#dadada" stroke="#b5b5b5" stroke-width="1"/><path d="M0.3 11.8 H18.7" stroke="#b5b5b5" stroke-width="1.4"/></svg><svg class="ic" style="left:1153px;top:132px" width="17" height="13" viewBox="0 0 17 13"><path d="M3.5 1 H13.5 L16 7 V10.5 Q16 12 14.5 12 H2.5 Q1 12 1 10.5 V7 Z" fill="none" stroke="#b5b5b5" stroke-width="1.1"/><path d="M1 7 H16" stroke="#b5b5b5" stroke-width="1"/><circle cx="9" cy="9.5" r="0.6" fill="#b5b5b5"/><circle cx="11" cy="9.5" r="0.6" fill="#b5b5b5"/><circle cx="13" cy="9.5" r="0.6" fill="#b5b5b5"/></svg><svg class="ic" style="left:1153px;top:191px" width="16" height="15" viewBox="0 0 16 15"><path d="M9.2 1.2 L3.2 12.8 M6.8 1.2 L12.8 12.8 M1.5 10.2 H14.5 M2 12.6 L3 11.6 M14 12.6 L13 11.6" fill="none" stroke="#9fc3f5" stroke-width="1.5" stroke-linecap="round"/></svg><svg class="ic" style="left:1153px;top:218px" width="16" height="16" viewBox="0 0 16 16"><path d="M1.5 8 L8 2 L14.5 8 M3.3 6.5 V14.3 H12.7 V6.5 M12 3 V5.5" fill="none" stroke="#9fc3f5" stroke-width="1.4" stroke-linejoin="round" stroke-linecap="round"/><rect x="6.3" y="9.8" width="3.4" height="4.5" fill="#9fc3f5"/></svg><svg class="ic" style="left:1153px;top:247px" width="16" height="14" viewBox="0 0 16 14"><rect x="0.8" y="1" width="14.4" height="11.5" rx="1.5" fill="none" stroke="#9fc3f5" stroke-width="1.3"/><path d="M0.8 3.8 H15.2" stroke="#9fc3f5" stroke-width="1"/><rect x="3" y="8.5" width="10" height="1.8" fill="#9fc3f5"/></svg><svg class="ic" style="left:1153px;top:275px" width="16" height="14" viewBox="0 0 16 14"><rect x="0.8" y="1" width="14.4" height="11.5" rx="1.5" fill="none" stroke="#9fc3f5" stroke-width="1.3"/><circle cx="5" cy="4.8" r="1.4" fill="#9fc3f5"/><path d="M1 11 L5.5 7.5 L8 9.5 L11 6 L15 10 V12.5 H1 Z" fill="#9fc3f5"/></svg><svg class="ic" style="left:1154px;top:302px" width="14" height="16" viewBox="0 0 14 16"><path d="M5.2 13 V3 L12 1.5 V11" fill="none" stroke="#9fc3f5" stroke-width="1.5"/><ellipse cx="3.4" cy="13" rx="2.3" ry="1.9" fill="#9fc3f5"/><ellipse cx="10.2" cy="11" rx="2.3" ry="1.9" fill="#9fc3f5"/></svg><svg class="ic" style="left:1153px;top:331px" width="16" height="14" viewBox="0 0 16 14"><rect x="0.8" y="1" width="14.4" height="11.5" rx="1" fill="none" stroke="#9fc3f5" stroke-width="1.3"/><path d="M3.6 1 V12.5 M12.4 1 V12.5 M3.6 6.75 H12.4 M0.8 4 H3.6 M0.8 6.75 H3.6 M0.8 9.5 H3.6 M12.4 4 H15.2 M12.4 6.75 H15.2 M12.4 9.5 H15.2" stroke="#9fc3f5" stroke-width="1"/></svg><svg class="ic" style="left:1155px;top:358px" width="13" height="16" viewBox="0 0 13 16"><path d="M1 2 Q1 1 2 1 H7.5 L11.8 5.3 V14 Q11.8 15 10.8 15 H2 Q1 15 1 14 Z M7.5 1 V5.3 H11.8" fill="none" stroke="#9fc3f5" stroke-width="1.2" stroke-linejoin="round"/></svg><svg class="ic" style="left:1153px;top:387px" width="16" height="14" viewBox="0 0 16 14"><path d="M0.8 2 Q0.8 1 1.8 1 H5.5 L7 2.6 H14.2 Q15.2 2.6 15.2 3.6 V12 Q15.2 13 14.2 13 H1.8 Q0.8 13 0.8 12 Z M0.8 5 H15.2" fill="none" stroke="#9fc3f5" stroke-width="1.2" stroke-linejoin="round"/></svg><svg class="ic" style="left:1153px;top:414px" width="16" height="16" viewBox="0 0 16 16"><path d="M8 0.8 L15 4.5 H1 Z" fill="#9fc3f5"/><rect x="1" y="4.5" width="14" height="1.4" fill="#9fc3f5"/><path d="M3 6.5 V13 M5.7 6.5 V13 M8 6.5 V13 M10.3 6.5 V13 M13 6.5 V13" stroke="#9fc3f5" stroke-width="1.5"/><rect x="0.5" y="13.6" width="15" height="1.4" fill="#9fc3f5"/></svg><svg class="ic" style="left:1153px;top:442px" width="16" height="16" viewBox="0 0 16 16"><circle cx="8" cy="8" r="6.6" fill="none" stroke="#9fc3f5" stroke-width="1.3"/><path d="M8 4 V11 M5.3 8.6 L8 11.3 L10.7 8.6" fill="none" stroke="#9fc3f5" stroke-width="1.3" stroke-linecap="round" stroke-linejoin="round"/></svg><svg class="ic" style="left:1153px;top:470px" width="16" height="16" viewBox="0 0 16 16"><path d="M3.5 13.5 A6.7 6.7 0 1 1 12.5 13.5 M5 11.3 A4.3 4.3 0 1 1 11 11.3 M6.6 9.3 A2 2 0 1 1 9.4 9.3" fill="none" stroke="#9fc3f5" stroke-width="1.2" stroke-linecap="round"/><circle cx="8" cy="8" r="0.9" fill="#9fc3f5"/></svg><svg class="ic" style="left:1152px;top:531px" width="18" height="13" viewBox="0 0 18 13"><path d="M4.5 11.8 H14 A3.3 3.3 0 0 0 14.5 5.2 A4.8 4.8 0 0 0 5.5 4.3 A3.8 3.8 0 0 0 4.5 11.8 Z" fill="none" stroke="#9fd3e3" stroke-width="1.2"/></svg><svg class="ic" style="left:1152px;top:558px" width="18" height="15" viewBox="0 0 18 15"><path d="M10.8 3.6 H7 L5.5 2 H2 Q1 2 1 3 V13 Q1 14 2 14 H13.8 Q14.8 14 14.8 13 V8.8 M1 6 H10.5" fill="none" stroke="#9fd3e3" stroke-width="1.2" stroke-linejoin="round"/><circle cx="14.3" cy="4.3" r="3.3" fill="#9fd3e3"/><circle cx="14.3" cy="3.4" r="1" fill="#fff"/><path d="M12.6 6.5 Q14.3 4.6 16 6.5" fill="#fff"/></svg><div class="sh" style="left:1151px;top:81px;color:#a2a2a2">Emplacements</div><div class="sh" style="left:1151px;top:169px;color:#a2a2a2">Favoris</div><div class="sh" style="left:1151px;top:509px;color:#a2a2a2">iCloud</div><div class="sh" style="left:1151px;top:597px;color:#a2a2a2">Tags</div><div class="si" style="left:1175px;top:101px;color:#a3a3a3">Francis’s MacBook Air</div><div class="si" style="left:1175px;top:129px;color:#a3a3a3">Macintosh HD</div><div class="si" style="left:1175px;top:189px;color:#a3a3a3">Applications</div><div class="si" style="left:1175px;top:217px;color:#a3a3a3">francis</div><div class="si" style="left:1175px;top:245px;color:#a3a3a3">Bureau</div><div class="si" style="left:1175px;top:273px;color:#a3a3a3">Images</div><div class="si" style="left:1175px;top:301px;color:#a3a3a3">Musique</div><div class="si" style="left:1175px;top:329px;color:#a3a3a3">Vidéos</div><div class="si" style="left:1175px;top:357px;color:#a3a3a3">Documents</div><div class="si" style="left:1175px;top:385px;color:#a3a3a3">&gt; 100</div><div class="si" style="left:1175px;top:413px;color:#a3a3a3">Bibliothèque</div><div class="si" style="left:1175px;top:441px;color:#a3a3a3">Téléchargements</div><div class="si" style="left:1175px;top:469px;color:#a3a3a3">AirDrop</div><div class="si" style="left:1175px;top:529px;color:#a3a3a3">iCloud Drive</div><div class="si" style="left:1175px;top:557px;color:#a3a3a3">Partagé</div><svg class="ic" style="left:1410px;top:43px" width="12" height="17" viewBox="0 0 12 17"><path d="M10 1.5 L2.5 8.5 L10 15.5" fill="none" stroke="#c9c9c9" stroke-width="1.6" stroke-linecap="round" stroke-linejoin="round"/></svg><svg class="ic" style="left:1447px;top:43px" width="12" height="17" viewBox="0 0 12 17"><path d="M2 1.5 L9.5 8.5 L2 15.5" fill="none" stroke="#c9c9c9" stroke-width="1.6" stroke-linecap="round" stroke-linejoin="round"/></svg><div class="abs" style="left:1477px;top:40px;height:22px;line-height:22px;font-size:15px;font-weight:bold;color:#a6a6a6">Library</div><svg class="ic" style="left:1767px;top:44px" width="24" height="14" viewBox="0 0 24 14"><path d="M2 2 H3 M4 7 H5 M6 12 H7" stroke="#b3b3b3" stroke-width="1.5"/><path d="M5.7 2 H17.5 M7.5 7 H19.5 M9.5 12 H21.5" stroke="#b3b3b3" stroke-width="1.4"/></svg><svg class="ic" style="left:1796px;top:48px" width="10" height="6" viewBox="0 0 10 6"><path d="M1 1 L5 5 L9 1" fill="none" stroke="#b3b3b3" stroke-width="1.5" stroke-linecap="round" stroke-linejoin="round"/></svg><svg class="ic" style="left:1830px;top:44px" width="20" height="14" viewBox="0 0 20 14"><path d="M2 2 H3.2 M2 7 H3.2 M2 12 H3.2" stroke="#b3b3b3" stroke-width="1.5"/><path d="M5.3 2 H17.8 M5.3 7 H17.8 M5.3 12 H17.8" stroke="#b3b3b3" stroke-width="1.4"/></svg><svg class="ic" style="left:1855px;top:43px" width="10" height="16" viewBox="0 0 10 16"><path d="M1 5.3 L5 1.3 L9 5.3 M1 10.7 L5 14.7 L9 10.7" fill="none" stroke="#b3b3b3" stroke-width="1.5" stroke-linecap="round" stroke-linejoin="round"/></svg><svg class="ic" style="left:1913px;top:41px" width="20" height="19" viewBox="0 0 20 19"><path d="M1 1.2 H19 M1 10.7 H19" stroke="#b3b3b3" stroke-width="1.1"/><g fill="none" stroke="#b3b3b3" stroke-width="1.2"><rect x="1.6" y="4.2" width="4.2" height="4.2" rx="1"/><rect x="7.9" y="4.2" width="4.2" height="4.2" rx="1"/><rect x="14.2" y="4.2" width="4.2" height="4.2" rx="1"/><rect x="1.6" y="13.1" width="4.2" height="4.2" rx="1"/><rect x="7.9" y="13.1" width="4.2" height="4.2" rx="1"/><rect x="14.2" y="13.1" width="4.2" height="4.2" rx="1"/></g></svg><svg class="ic" style="left:1939px;top:48px" width="10" height="6" viewBox="0 0 10 6"><path d="M1 1 L5 5 L9 1" fill="none" stroke="#b3b3b3" stroke-width="1.5" stroke-linecap="round" stroke-linejoin="round"/></svg><svg class="ic" style="left:1970px;top:39px" width="17" height="21" viewBox="0 0 17 21"><path d="M5.5 7.5 H3 Q1.5 7.5 1.5 9 V18 Q1.5 19.4 3 19.4 H14 Q15.4 19.4 15.4 18 V9 Q15.4 7.5 14 7.5 H11.5" fill="none" stroke="#b3b3b3" stroke-width="1.3" stroke-linecap="round"/><path d="M8.5 13 V1.5 M5.5 4.5 L8.5 1.5 L11.5 4.5" fill="none" stroke="#b3b3b3" stroke-width="1.3" stroke-linecap="round" stroke-linejoin="round"/></svg><svg class="ic" style="left:2007px;top:41px" width="21" height="21" viewBox="0 0 21 21"><path d="M1.8 10.5 L11 1.3 Q11.3 1 11.8 1 H17.8 Q19.5 1 19.5 2.7 V8.7 Q19.5 9.2 19.2 9.5 L10 18.7 Q9 19.7 8 18.7 L1.8 12.5 Q0.8 11.5 1.8 10.5 Z" fill="none" stroke="#b3b3b3" stroke-width="1.3" stroke-linejoin="round"/><circle cx="14.3" cy="6" r="0.9" fill="#b3b3b3"/></svg><svg class="ic" style="left:2050px;top:41px" width="19" height="19" viewBox="0 0 19 19"><circle cx="9.5" cy="9.5" r="8.2" fill="none" stroke="#b3b3b3" stroke-width="1.3"/><circle cx="5.6" cy="9.5" r="0.95" fill="#b3b3b3"/><circle cx="9.5" cy="9.5" r="0.95" fill="#b3b3b3"/><circle cx="13.4" cy="9.5" r="0.95" fill="#b3b3b3"/></svg><svg class="ic" style="left:2074px;top:48px" width="10" height="6" viewBox="0 0 10 6"><path d="M1 1 L5 5 L9 1" fill="none" stroke="#b3b3b3" stroke-width="1.5" stroke-linecap="round" stroke-linejoin="round"/></svg><svg class="ic" style="left:2129px;top:42px" width="18" height="18" viewBox="0 0 18 18"><circle cx="7.6" cy="7.4" r="6.2" fill="none" stroke="#b3b3b3" stroke-width="1.4"/><path d="M12.2 12 L16.4 16.2" stroke="#b3b3b3" stroke-width="1.9" stroke-linecap="round"/></svg><div class="hd" style="left:1436px;top:82px;font-weight:bold;color:#222;font-size:11.3px">Nom</div><svg class="ic" style="left:1740px;top:87px" width="9" height="6" viewBox="0 0 9 6"><path d="M1 5 L4.5 1.5 L8 5" fill="none" stroke="#8a8a8a" stroke-width="1.1" stroke-linecap="round"/></svg><div class="abs" style="left:1757px;top:81px;width:1px;height:19px;background:#e3e3e3"></div><div class="abs" style="left:1938px;top:81px;width:1px;height:19px;background:#e3e3e3"></div><div class="abs" style="left:2035px;top:81px;width:1px;height:19px;background:#e3e3e3"></div><div class="hd" style="left:1765px;top:82px;color:#7f7f7f">Date de modification</div><div class="hd" style="left:1946px;top:82px;color:#7f7f7f">Taille</div><div class="hd" style="left:2043px;top:82px;color:#7f7f7f">Type</div><svg class="ic" style="left:1405px;top:116px" width="6" height="8"><use href="#chev" /></svg><svg class="ic" style="left:1415px;top:113px" width="16" height="14"><use href="#folder"/></svg><div class="t" style="left:1436px;top:110px;color:#222">Application Scripts</div><div class="t" style="left:1765px;top:110px;color:#7b7b7b">18 juin 2024 à 22:54</div><div class="abs" style="left:2016.5px;top:120.6px;width:11.5px;height:1.3px;background:linear-gradient(90deg,#7b7b7b 0 4.6px,transparent 4.6px 6.8px,#7b7b7b 6.8px)"></div><div class="t" style="left:2043px;top:110px;color:#7b7b7b">Dossier</div><div class="stripe" style="left:1399px;top:130px;width:768px;border-radius:5px 0 0 5px"></div><svg class="ic" style="left:1405px;top:136px" width="6" height="8"><use href="#chev" /></svg><svg class="ic" style="left:1415px;top:133px" width="16" height="14"><use href="#folder"/></svg><div class="t" style="left:1436px;top:130px;color:#222">Application Support</div><div class="t" style="left:1765px;top:130px;color:#7b7b7b">19 juin 2024 à 00:47</div><div class="abs" style="left:2016.5px;top:140.6px;width:11.5px;height:1.3px;background:linear-gradient(90deg,#7b7b7b 0 4.6px,transparent 4.6px 6.8px,#7b7b7b 6.8px)"></div><div class="t" style="left:2043px;top:130px;color:#7b7b7b">Dossier</div><svg class="ic" style="left:1415px;top:153px" width="16" height="14"><use href="#folder"/></svg><svg class="ic" style="left:1416px;top:160px" width="6" height="6"><use href="#alias"/></svg><div class="t" style="left:1436px;top:150px;color:#222">Audio</div><div class="t" style="left:1765px;top:150px;color:#7b7b7b">18 juin 2024 à 22:54</div><div class="t r" style="right:142px;top:150px;color:#7b7b7b">17 octets</div><div class="t" style="left:2043px;top:150px;color:#7b7b7b">Alias</div><div class="stripe" style="left:1399px;top:170px;width:768px;border-radius:5px 0 0 5px"></div><svg class="ic" style="left:1405px;top:176px" width="6" height="8"><use href="#chev" /></svg><svg class="ic" style="left:1415px;top:173px" width="16" height="14"><use href="#folder"/></svg><div class="t" style="left:1436px;top:170px;color:#222">Caches</div><div class="t" style="left:1765px;top:170px;color:#7b7b7b">18 juin 2024 à 23:21</div><div class="abs" style="left:2016.5px;top:180.6px;width:11.5px;height:1.3px;background:linear-gradient(90deg,#7b7b7b 0 4.6px,transparent 4.6px 6.8px,#7b7b7b 6.8px)"></div><div class="t" style="left:2043px;top:170px;color:#7b7b7b">Dossier</div><svg class="ic" style="left:1415px;top:193px" width="16" height="14"><use href="#folder"/></svg><svg class="ic" style="left:1416px;top:200px" width="6" height="6"><use href="#alias"/></svg><div class="t" style="left:1436px;top:190px;color:#222">Calendars</div><div class="t" style="left:1765px;top:190px;color:#7b7b7b">18 juin 2024 à 22:54</div><div class="t r" style="right:142px;top:190px;color:#7b7b7b">21 octets</div><div class="t" style="left:2043px;top:190px;color:#7b7b7b">Alias</div><div class="stripe" style="left:1399px;top:210px;width:768px;border-radius:5px 0 0 5px"></div><svg class="ic" style="left:1415px;top:213px" width="16" height="14"><use href="#folder"/></svg><svg class="ic" style="left:1416px;top:220px" width="6" height="6"><use href="#alias"/></svg><div class="t" style="left:1436px;top:210px;color:#222">ColorPickers</div><div class="t" style="left:1765px;top:210px;color:#7b7b7b">18 juin 2024 à 22:54</div><div class="t r" style="right:142px;top:210px;color:#7b7b7b">24 octets</div><div class="t" style="left:2043px;top:210px;color:#7b7b7b">Alias</div><svg class="ic" style="left:1415px;top:233px" width="16" height="14"><use href="#folder"/></svg><svg class="ic" style="left:1416px;top:240px" width="6" height="6"><use href="#alias"/></svg><div class="t" style="left:1436px;top:230px;color:#222">Colors</div><div class="t" style="left:1765px;top:230px;color:#7b7b7b">18 juin 2024 à 22:54</div><div class="t r" style="right:142px;top:230px;color:#7b7b7b">18 octets</div><div class="t" style="left:2043px;top:230px;color:#7b7b7b">Alias</div><div class="stripe" style="left:1399px;top:250px;width:768px;border-radius:5px 0 0 5px"></div><svg class="ic" style="left:1415px;top:251px" width="16" height="18"><use href="#doc"/></svg><svg class="ic" style="left:1415.5px;top:261px" width="6" height="6"><use href="#alias"/></svg><div class="t" style="left:1436px;top:250px;color:#222">ColorSync</div><div class="t" style="left:1765px;top:250px;color:#7b7b7b">18 juin 2024 à 22:54</div><div class="t r" style="right:142px;top:250px;color:#7b7b7b">21 octets</div><div class="t" style="left:2043px;top:250px;color:#7b7b7b">Alias</div><svg class="ic" style="left:1415px;top:271px" width="16" height="18"><use href="#doc"/></svg><svg class="ic" style="left:1415.5px;top:281px" width="6" height="6"><use href="#alias"/></svg><div class="t" style="left:1436px;top:270px;color:#222">Components</div><div class="t" style="left:1765px;top:270px;color:#7b7b7b">18 juin 2024 à 22:54</div><div class="t r" style="right:142px;top:270px;color:#7b7b7b">22 octets</div><div class="t" style="left:2043px;top:270px;color:#7b7b7b">Alias</div><div class="stripe" style="left:1399px;top:290px;width:768px;border-radius:5px 0 0 5px"></div><svg class="ic" style="left:1415px;top:293px" width="16" height="14"><use href="#folder"/></svg><svg class="ic" style="left:1416px;top:300px" width="6" height="6"><use href="#alias"/></svg><div class="t" style="left:1436px;top:290px;color:#222">Compositions</div><div class="t" style="left:1765px;top:290px;color:#7b7b7b">18 juin 2024 à 22:54</div><div class="t r" style="right:142px;top:290px;color:#7b7b7b">24 octets</div><div class="t" style="left:2043px;top:290px;color:#7b7b7b">Alias</div><svg class="ic" style="left:1415px;top:311px" width="16" height="18"><use href="#doc"/></svg><svg class="ic" style="left:1415.5px;top:321px" width="6" height="6"><use href="#alias"/></svg><div class="t" style="left:1436px;top:310px;color:#222">Dictionaries</div><div class="t" style="left:1765px;top:310px;color:#7b7b7b">18 juin 2024 à 22:54</div><div class="t r" style="right:142px;top:310px;color:#7b7b7b">24 octets</div><div class="t" style="left:2043px;top:310px;color:#7b7b7b">Alias</div><div class="stripe" style="left:1399px;top:330px;width:768px;border-radius:5px 0 0 5px"></div><svg class="ic" style="left:1415px;top:333px" width="16" height="14"><use href="#folder"/></svg><svg class="ic" style="left:1416px;top:340px" width="6" height="6"><use href="#alias"/></svg><div class="t" style="left:1436px;top:330px;color:#222">Favorites</div><div class="t" style="left:1765px;top:330px;color:#7b7b7b">18 juin 2024 à 22:54</div><div class="t r" style="right:142px;top:330px;color:#7b7b7b">21 octets</div><div class="t" style="left:2043px;top:330px;color:#7b7b7b">Alias</div><svg class="ic" style="left:1415px;top:351px" width="16" height="18"><use href="#doc"/></svg><svg class="ic" style="left:1415.5px;top:361px" width="6" height="6"><use href="#alias"/></svg><div class="t" style="left:1436px;top:350px;color:#222">Filters</div><div class="t" style="left:1765px;top:350px;color:#7b7b7b">18 juin 2024 à 22:54</div><div class="t r" style="right:142px;top:350px;color:#7b7b7b">19 octets</div><div class="t" style="left:2043px;top:350px;color:#7b7b7b">Alias</div><div class="stripe" style="left:1399px;top:370px;width:768px;border-radius:5px 0 0 5px"></div><svg class="ic" style="left:1415px;top:373px" width="16" height="14"><use href="#folder"/></svg><svg class="ic" style="left:1416px;top:380px" width="6" height="6"><use href="#alias"/></svg><div class="t" style="left:1436px;top:370px;color:#222">FontCollections</div><div class="t" style="left:1765px;top:370px;color:#7b7b7b">18 juin 2024 à 22:54</div><div class="t r" style="right:142px;top:370px;color:#7b7b7b">27 octets</div><div class="t" style="left:2043px;top:370px;color:#7b7b7b">Alias</div><svg class="ic" style="left:1415px;top:393px" width="16" height="14"><use href="#folder"/></svg><svg class="ic" style="left:1416px;top:400px" width="6" height="6"><use href="#alias"/></svg><div class="t" style="left:1436px;top:390px;color:#222">Fonts</div><div class="t" style="left:1765px;top:390px;color:#7b7b7b">18 juin 2024 à 22:54</div><div class="t r" style="right:142px;top:390px;color:#7b7b7b">17 octets</div><div class="t" style="left:2043px;top:390px;color:#7b7b7b">Alias</div><div class="stripe" style="left:1399px;top:410px;width:768px;border-radius:5px 0 0 5px"></div><svg class="ic" style="left:1405px;top:416px" width="6" height="8"><use href="#chev" /></svg><svg class="ic" style="left:1415px;top:413px" width="16" height="14"><use href="#folder"/></svg><div class="t" style="left:1436px;top:410px;color:#222">HTTPStorages</div><div class="t" style="left:1765px;top:410px;color:#7b7b7b">18 juin 2024 à 23:21</div><div class="abs" style="left:2016.5px;top:420.6px;width:11.5px;height:1.3px;background:linear-gradient(90deg,#7b7b7b 0 4.6px,transparent 4.6px 6.8px,#7b7b7b 6.8px)"></div><div class="t" style="left:2043px;top:410px;color:#7b7b7b">Dossier</div><svg class="ic" style="left:1405px;top:436px" width="6" height="8"><use href="#chev" /></svg><svg class="ic" style="left:1415px;top:433px" width="16" height="14"><use href="#folder"/></svg><div class="t" style="left:1436px;top:430px;color:#222">Images</div><div class="t" style="left:1765px;top:430px;color:#7b7b7b">18 juin 2024 à 22:54</div><div class="abs" style="left:2016.5px;top:440.6px;width:11.5px;height:1.3px;background:linear-gradient(90deg,#7b7b7b 0 4.6px,transparent 4.6px 6.8px,#7b7b7b 6.8px)"></div><div class="t" style="left:2043px;top:430px;color:#7b7b7b">Dossier</div><div class="stripe" style="left:1399px;top:450px;width:768px;border-radius:5px 0 0 5px"></div><svg class="ic" style="left:1415px;top:453px" width="16" height="14"><use href="#folder"/></svg><svg class="ic" style="left:1416px;top:460px" width="6" height="6"><use href="#alias"/></svg><div class="t" style="left:1436px;top:450px;color:#222">Input Methods</div><div class="t" style="left:1765px;top:450px;color:#7b7b7b">18 juin 2024 à 22:54</div><div class="t r" style="right:142px;top:450px;color:#7b7b7b">25 octets</div><div class="t" style="left:2043px;top:450px;color:#7b7b7b">Alias</div><svg class="ic" style="left:1415px;top:471px" width="16" height="18"><use href="#doc"/></svg><svg class="ic" style="left:1415.5px;top:481px" width="6" height="6"><use href="#alias"/></svg><div class="t" style="left:1436px;top:470px;color:#222">KeyBindings</div><div class="t" style="left:1765px;top:470px;color:#7b7b7b">18 juin 2024 à 22:54</div><div class="t r" style="right:142px;top:470px;color:#7b7b7b">23 octets</div><div class="t" style="left:2043px;top:470px;color:#7b7b7b">Alias</div><div class="stripe" style="left:1399px;top:490px;width:768px;border-radius:5px 0 0 5px"></div><svg class="ic" style="left:1415px;top:493px" width="16" height="14"><use href="#folder"/></svg><svg class="ic" style="left:1416px;top:500px" width="6" height="6"><use href="#alias"/></svg><div class="t" style="left:1436px;top:490px;color:#222">Keyboard Layouts</div><div class="t" style="left:1765px;top:490px;color:#7b7b7b">18 juin 2024 à 22:54</div><div class="t r" style="right:142px;top:490px;color:#7b7b7b">28 octets</div><div class="t" style="left:2043px;top:490px;color:#7b7b7b">Alias</div><svg class="ic" style="left:1415px;top:513px" width="16" height="14"><use href="#folder"/></svg><svg class="ic" style="left:1416px;top:520px" width="6" height="6"><use href="#alias"/></svg><div class="t" style="left:1436px;top:510px;color:#222">Keychains</div><div class="t" style="left:1765px;top:510px;color:#7b7b7b">18 juin 2024 à 22:54</div><div class="t r" style="right:142px;top:510px;color:#7b7b7b">21 octets</div><div class="t" style="left:2043px;top:510px;color:#7b7b7b">Alias</div><div class="stripe" style="left:1399px;top:530px;width:768px;border-radius:5px 0 0 5px"></div><svg class="ic" style="left:1405px;top:536px" width="6" height="8"><use href="#chev" /></svg><svg class="ic" style="left:1415px;top:533px" width="16" height="14"><use href="#folder"/></svg><div class="t" style="left:1436px;top:530px;color:#222">Logs</div><div class="t" style="left:1765px;top:530px;color:#7b7b7b">18 juin 2024 à 22:54</div><div class="abs" style="left:2016.5px;top:540.6px;width:11.5px;height:1.3px;background:linear-gradient(90deg,#7b7b7b 0 4.6px,transparent 4.6px 6.8px,#7b7b7b 6.8px)"></div><div class="t" style="left:2043px;top:530px;color:#7b7b7b">Dossier</div><svg class="ic" style="left:1415px;top:553px" width="16" height="14"><use href="#folder"/></svg><svg class="ic" style="left:1416px;top:560px" width="6" height="6"><use href="#alias"/></svg><div class="t" style="left:1436px;top:550px;color:#222">Mail</div><div class="t" style="left:1765px;top:550px;color:#7b7b7b">18 juin 2024 à 22:54</div><div class="t r" style="right:142px;top:550px;color:#7b7b7b">16 octets</div><div class="t" style="left:2043px;top:550px;color:#7b7b7b">Alias</div><div class="stripe" style="left:1399px;top:570px;width:768px;background:#dcdcdc;border-radius:5px 0 0 5px"></div><svg class="ic" style="left:1404px;top:577px" width="8" height="6" viewBox="0 0 8 6"><path d="M0.8 1 L4 4.8 L7.2 1" fill="none" stroke="#6f6f6f" stroke-width="1.2" stroke-linecap="round" stroke-linejoin="round"/></svg><svg class="ic" style="left:1415px;top:573px" width="16" height="14"><use href="#folder"/></svg><div class="t" style="left:1436px;top:570px;color:#222">Mail Downloads</div><div class="t" style="left:1765px;top:570px;color:#7b7b7b">aujourd’hui à 10:45</div><div class="abs" style="left:2016.5px;top:580.6px;width:11.5px;height:1.3px;background:linear-gradient(90deg,#7b7b7b 0 4.6px,transparent 4.6px 6.8px,#7b7b7b 6.8px)"></div><div class="t" style="left:2043px;top:570px;color:#7b7b7b">Dossier</div><svg class="ic" style="left:1419px;top:597px" width="8" height="6" viewBox="0 0 8 6"><path d="M0.8 1 L4 4.8 L7.2 1" fill="none" stroke="#6f6f6f" stroke-width="1.2" stroke-linecap="round" stroke-linejoin="round"/></svg><svg class="ic" style="left:1430px;top:593px" width="16" height="14"><use href="#folder"/></svg><div class="t" style="left:1451px;top:590px;color:#222;letter-spacing:-0.12px">7D2D763C-A153-4670-A647-F21ECF13FA17</div><div class="t" style="left:1765px;top:590px;color:#7b7b7b">25 juin 2024 à 10:40</div><div class="abs" style="left:2016.5px;top:600.6px;width:11.5px;height:1.3px;background:linear-gradient(90deg,#7b7b7b 0 4.6px,transparent 4.6px 6.8px,#7b7b7b 6.8px)"></div><div class="t" style="left:2043px;top:590px;color:#7b7b7b">Dossier</div><div class="stripe" style="left:1399px;top:610px;width:768px;border-radius:5px 0 0 5px"></div><svg class="ic" style="left:1446.5px;top:615.5px" width="12.5" height="10" viewBox="0 0 13 10.5"><use href="#imgicon"/></svg><div class="t" style="left:1466px;top:610px;color:#222">image001.jpg</div><svg class="ic" style="left:1735px;top:615px" width="16" height="11"><use href="#envelope"/></svg><div class="t" style="left:1765px;top:610px;color:#7b7b7b">25 juin 2024 à 10:23</div><div class="t r" style="right:142px;top:610px;color:#7b7b7b">57 ko</div><div class="t" style="left:2043px;top:610px;color:#7b7b7b">Image JPEG</div><svg class="ic" style="left:1419px;top:637px" width="8" height="6" viewBox="0 0 8 6"><path d="M0.8 1 L4 4.8 L7.2 1" fill="none" stroke="#6f6f6f" stroke-width="1.2" stroke-linecap="round" stroke-linejoin="round"/></svg><svg class="ic" style="left:1430px;top:633px" width="16" height="14"><use href="#folder"/></svg><div class="t" style="left:1451px;top:630px;color:#222;letter-spacing:-0.12px">830ADF23-468F-45E2-90F2-BC0B17FE1DBA</div><div class="t" style="left:1765px;top:630px;color:#7b7b7b">20 juin 2024 à 18:18</div><div class="abs" style="left:2016.5px;top:640.6px;width:11.5px;height:1.3px;background:linear-gradient(90deg,#7b7b7b 0 4.6px,transparent 4.6px 6.8px,#7b7b7b 6.8px)"></div><div class="t" style="left:2043px;top:630px;color:#7b7b7b">Dossier</div><div class="stripe" style="left:1399px;top:650px;width:768px;border-radius:5px 0 0 5px"></div><svg class="ic" style="left:1447px;top:652px" width="12" height="15"><use href="#pdficon"/></svg><div class="t" style="left:1466px;top:650px;color:#222">Ticket.pdf</div><svg class="ic" style="left:1735px;top:655px" width="16" height="11"><use href="#envelope"/></svg><div class="t" style="left:1765px;top:650px;color:#7b7b7b">20 juin 2024 à 17:44</div><div class="t r" style="right:142px;top:650px;color:#7b7b7b">20 ko</div><div class="t" style="left:2043px;top:650px;color:#7b7b7b">Document PDF</div><svg class="ic" style="left:1419px;top:677px" width="8" height="6" viewBox="0 0 8 6"><path d="M0.8 1 L4 4.8 L7.2 1" fill="none" stroke="#6f6f6f" stroke-width="1.2" stroke-linecap="round" stroke-linejoin="round"/></svg><svg class="ic" style="left:1430px;top:673px" width="16" height="14"><use href="#folder"/></svg><div class="t" style="left:1451px;top:670px;color:#222;letter-spacing:-0.12px">BB0ED52B-71D7-4FA1-BBDA-2E02B1C123A9</div><div class="t" style="left:1765px;top:670px;color:#7b7b7b">25 juin 2024 à 11:24</div><div class="abs" style="left:2016.5px;top:680.6px;width:11.5px;height:1.3px;background:linear-gradient(90deg,#7b7b7b 0 4.6px,transparent 4.6px 6.8px,#7b7b7b 6.8px)"></div><div class="t" style="left:2043px;top:670px;color:#7b7b7b">Dossier</div><div class="stripe" style="left:1399px;top:690px;width:768px;border-radius:5px 0 0 5px"></div><svg class="ic" style="left:1446.5px;top:695.5px" width="12.5" height="10" viewBox="0 0 13 10.5"><use href="#imgicon"/></svg><div class="t" style="left:1466px;top:690px;color:#222">image001.jpg</div><svg class="ic" style="left:1735px;top:695px" width="16" height="11"><use href="#envelope"/></svg><div class="t" style="left:1765px;top:690px;color:#7b7b7b">25 juin 2024 à 10:23</div><div class="t r" style="right:142px;top:690px;color:#7b7b7b">57 ko</div><div class="t" style="left:2043px;top:690px;color:#7b7b7b">Image JPEG</div><svg class="ic" style="left:1415px;top:711px" width="16" height="18"><use href="#doc"/></svg><svg class="ic" style="left:1415.5px;top:721px" width="6" height="6"><use href="#alias"/></svg><div class="t" style="left:1436px;top:710px;color:#222">PDF Services</div><div class="t" style="left:1765px;top:710px;color:#7b7b7b">18 juin 2024 à 22:54</div><div class="t r" style="right:142px;top:710px;color:#7b7b7b">24 octets</div><div class="t" style="left:2043px;top:710px;color:#7b7b7b">Alias</div><div class="stripe" style="left:1399px;top:730px;width:768px;border-radius:5px 0 0 5px"></div><svg class="ic" style="left:1405px;top:736px" width="6" height="8"><use href="#chev" /></svg><svg class="ic" style="left:1415px;top:733px" width="16" height="14"><use href="#folder"/></svg><div class="t" style="left:1436px;top:730px;color:#222">Preferences</div><div class="t" style="left:1765px;top:730px;color:#7b7b7b">aujourd’hui à 10:25</div><div class="abs" style="left:2016.5px;top:740.6px;width:11.5px;height:1.3px;background:linear-gradient(90deg,#7b7b7b 0 4.6px,transparent 4.6px 6.8px,#7b7b7b 6.8px)"></div><div class="t" style="left:2043px;top:730px;color:#7b7b7b">Dossier</div><svg class="ic" style="left:1415px;top:751px" width="16" height="18"><use href="#doc"/></svg><svg class="ic" style="left:1415.5px;top:761px" width="6" height="6"><use href="#alias"/></svg><div class="t" style="left:1436px;top:750px;color:#222">QuickLook</div><div class="t" style="left:1765px;top:750px;color:#7b7b7b">18 juin 2024 à 22:54</div><div class="t r" style="right:142px;top:750px;color:#7b7b7b">21 octets</div><div class="t" style="left:2043px;top:750px;color:#7b7b7b">Alias</div><div class="stripe" style="left:1399px;top:770px;width:768px;border-radius:5px 0 0 5px"></div><svg class="ic" style="left:1405px;top:776px" width="6" height="8"><use href="#chev" /></svg><svg class="ic" style="left:1415px;top:773px" width="16" height="14"><use href="#folder"/></svg><div class="t" style="left:1436px;top:770px;color:#222">Saved Application State</div><div class="t" style="left:1765px;top:770px;color:#7b7b7b">18 juin 2024 à 23:21</div><div class="abs" style="left:2016.5px;top:780.6px;width:11.5px;height:1.3px;background:linear-gradient(90deg,#7b7b7b 0 4.6px,transparent 4.6px 6.8px,#7b7b7b 6.8px)"></div><div class="t" style="left:2043px;top:770px;color:#7b7b7b">Dossier</div><svg class="ic" style="left:1415px;top:793px" width="16" height="14"><use href="#folder"/></svg><svg class="ic" style="left:1416px;top:800px" width="6" height="6"><use href="#alias"/></svg><div class="t" style="left:1436px;top:790px;color:#222">Sounds</div><div class="t" style="left:1765px;top:790px;color:#7b7b7b">18 juin 2024 à 22:54</div><div class="t r" style="right:142px;top:790px;color:#7b7b7b">18 octets</div><div class="t" style="left:2043px;top:790px;color:#7b7b7b">Alias</div><div class="stripe" style="left:1399px;top:810px;width:768px;border-radius:5px 0 0 5px"></div><svg class="ic" style="left:1415px;top:813px" width="16" height="14"><use href="#folder"/></svg><svg class="ic" style="left:1416px;top:820px" width="6" height="6"><use href="#alias"/></svg><div class="t" style="left:1436px;top:810px;color:#222">Spelling</div><div class="t" style="left:1765px;top:810px;color:#7b7b7b">18 juin 2024 à 22:54</div><div class="t r" style="right:142px;top:810px;color:#7b7b7b">20 octets</div><div class="t" style="left:2043px;top:810px;color:#7b7b7b">Alias</div><svg class="ic" style="left:1405px;top:836px" width="6" height="8"><use href="#chev" /></svg><svg class="ic" style="left:1415px;top:833px" width="16" height="14"><use href="#folder"/></svg><div class="t" style="left:1436px;top:830px;color:#222">SyncedPreferences</div><div class="t" style="left:1765px;top:830px;color:#7b7b7b">18 juin 2024 à 23:21</div><div class="abs" style="left:2016.5px;top:840.6px;width:11.5px;height:1.3px;background:linear-gradient(90deg,#7b7b7b 0 4.6px,transparent 4.6px 6.8px,#7b7b7b 6.8px)"></div><div class="t" style="left:2043px;top:830px;color:#7b7b7b">Dossier</div><div class="stripe" style="left:1399px;top:850px;width:768px;border-radius:5px 0 0 5px"></div><svg class="ic" style="left:1405px;top:856px" width="6" height="8"><use href="#chev" /></svg><svg class="ic" style="left:1415px;top:853px" width="16" height="14"><use href="#folder"/></svg><div class="t" style="left:1436px;top:850px;color:#222">WebKit</div><div class="t" style="left:1765px;top:850px;color:#7b7b7b">18 juin 2024 à 23:21</div><div class="abs" style="left:2016.5px;top:860.6px;width:11.5px;height:1.3px;background:linear-gradient(90deg,#7b7b7b 0 4.6px,transparent 4.6px 6.8px,#7b7b7b 6.8px)"></div><div class="t" style="left:2043px;top:850px;color:#7b7b7b">Dossier</div><div class="stripe" style="left:1399px;top:890px;width:768px;border-radius:5px 0 0 5px"></div><div class="abs" style="left:1389px;top:894px;width:778px;height:28px;background:#fff;border-top:1px solid #e3e3e3"></div><div class="abs" style="left:1389px;top:922px;width:778px;height:28px;background:#e9e9eb;border-top:1px solid #d6d6d6;border-bottom-right-radius:10px"></div><div class="abs" style="left:1379px;top:922px;width:787px;height:28px;line-height:28px;text-align:center;font-size:12px;color:#a5a5a5">1 sur 38 sélectionné, 387,29 Go disponible(s)</div><div class="mi" style="left:38px;font-weight:bold">Finder</div><div class="mi" style="left:100px;font-weight:normal">Fichier</div><div class="mi" style="left:162px;font-weight:normal">Édition</div><div class="mi" style="left:223px;font-weight:normal">Présentation</div><div class="mi" style="left:319px;font-weight:normal">Aller</div><div class="mi" style="left:368px;font-weight:normal">Fenêtre</div><div class="mi" style="left:434px;font-weight:normal">Aide</div><svg class="ic" style="left:305.8px;top:901px" width="12.4" height="13.2" viewBox="0 0 12.4 13.2"><defs><linearGradient id="hdb" x1="0" y1="0" x2="1" y2="1"><stop offset="0" stop-color="#7d8388"/><stop offset="0.5" stop-color="#b9c3c8"/><stop offset="1" stop-color="#5d6266"/></linearGradient></defs><rect x="0.3" y="0.3" width="11.8" height="12.6" rx="1.2" fill="url(#hdb)" stroke="#3f4346" stroke-width="0.6"/><rect x="1.2" y="1" width="10" height="0.9" fill="#555a5e"/><circle cx="6" cy="6.6" r="3.4" fill="none" stroke="#d6dde0" stroke-width="0.6"/><circle cx="6" cy="6.6" r="0.7" fill="#6a7074"/><rect x="0.6" y="11.3" width="11.2" height="1.6" fill="#26292b"/></svg><div class="pb" style="left:323px;top:900px;color:#6e6e6e">Macintosh HD</div><svg class="ic" style="left:401px;top:904.5px" width="5" height="7" viewBox="0 0 5 7"><path d="M1 0.8 L3.8 3.5 L1 6.2" fill="none" stroke="#7a7a7a" stroke-width="1.1" stroke-linecap="round" stroke-linejoin="round"/></svg><svg class="ic" style="left:411px;top:901px" width="15" height="14" viewBox="0 0 16 14"><use href="#folder"/><circle cx="8" cy="8.3" r="1.3" fill="none" stroke="#3d8fd6" stroke-width="0.8"/><path d="M5.8 11 Q8 9.3 10.2 11" fill="none" stroke="#3d8fd6" stroke-width="0.8"/></svg><div class="pb" style="left:430px;top:900px;color:#6e6e6e">Utilisateurs</div><svg class="ic" style="left:494px;top:904.5px" width="5" height="7" viewBox="0 0 5 7"><path d="M1 0.8 L3.8 3.5 L1 6.2" fill="none" stroke="#7a7a7a" stroke-width="1.1" stroke-linecap="round" stroke-linejoin="round"/></svg><svg class="ic" style="left:504px;top:901px" width="15" height="14" viewBox="0 0 16 14"><use href="#folder"/><path d="M5.5 9.5 L8 7.3 L10.5 9.5 V11.5 H5.5 Z" fill="none" stroke="#3d8fd6" stroke-width="0.8"/></svg><div class="pb" style="left:523px;top:900px;color:#6e6e6e">francis</div><svg class="ic" style="left:562px;top:904.5px" width="5" height="7" viewBox="0 0 5 7"><path d="M1 0.8 L3.8 3.5 L1 6.2" fill="none" stroke="#7a7a7a" stroke-width="1.1" stroke-linecap="round" stroke-linejoin="round"/></svg><svg class="ic" style="left:573px;top:901px" width="15" height="14" viewBox="0 0 16 14"><use href="#folder"/><path d="M5.5 8.3 H10.5 L8 6.8 Z M6 9 V11 M8 9 V11 M10 9 V11 M5.5 11.4 H10.5" fill="none" stroke="#3d8fd6" stroke-width="0.7"/></svg><div class="pb" style="left:592px;top:900px;color:#6e6e6e">Bibliothèque</div><svg class="ic" style="left:660px;top:904.5px" width="5" height="7" viewBox="0 0 5 7"><path d="M1 0.8 L3.8 3.5 L1 6.2" fill="none" stroke="#7a7a7a" stroke-width="1.1" stroke-linecap="round" stroke-linejoin="round"/></svg><svg class="ic" style="left:672px;top:901px" width="15" height="14" viewBox="0 0 16 14"><use href="#folder"/></svg><div class="pb" style="left:691px;top:900px;color:#6e6e6e">Containers</div><svg class="ic" style="left:751px;top:904.5px" width="5" height="7" viewBox="0 0 5 7"><path d="M1 0.8 L3.8 3.5 L1 6.2" fill="none" stroke="#7a7a7a" stroke-width="1.1" stroke-linecap="round" stroke-linejoin="round"/></svg><svg class="ic" style="left:762px;top:901px" width="15" height="14" viewBox="0 0 16 14"><use href="#folder"/><ellipse cx="8" cy="8.9" rx="2.6" ry="1.9" fill="#fff" stroke="#3d7fe0" stroke-width="0.7"/><rect x="6.6" y="8.2" width="2.8" height="1.5" fill="#3d7fe0"/></svg><div class="pb" style="left:781px;top:900px;color:#6e6e6e">Mail</div><svg class="ic" style="left:806px;top:904.5px" width="5" height="7" viewBox="0 0 5 7"><path d="M1 0.8 L3.8 3.5 L1 6.2" fill="none" stroke="#7a7a7a" stroke-width="1.1" stroke-linecap="round" stroke-linejoin="round"/></svg><svg class="ic" style="left:817px;top:901px" width="15" height="14" viewBox="0 0 16 14"><use href="#folder"/></svg><div class="pb" style="left:836px;top:900px;color:#6e6e6e">Data</div><svg class="ic" style="left:864px;top:904.5px" width="5" height="7" viewBox="0 0 5 7"><path d="M1 0.8 L3.8 3.5 L1 6.2" fill="none" stroke="#7a7a7a" stroke-width="1.1" stroke-linecap="round" stroke-linejoin="round"/></svg><svg class="ic" style="left:875px;top:901px" width="15" height="14" viewBox="0 0 16 14"><use href="#folder"/></svg><div class="pb" style="left:894px;top:900px;color:#6e6e6e">Library</div><svg class="ic" style="left:934px;top:904.5px" width="5" height="7" viewBox="0 0 5 7"><path d="M1 0.8 L3.8 3.5 L1 6.2" fill="none" stroke="#7a7a7a" stroke-width="1.1" stroke-linecap="round" stroke-linejoin="round"/></svg><svg class="ic" style="left:945px;top:901px" width="15" height="14" viewBox="0 0 16 14"><use href="#folder"/></svg><div class="pb" style="left:964px;top:900px;color:#6e6e6e">Mail Downloads</div><svg class="ic" style="left:1401.5px;top:901.8px" width="12.6" height="12.6" viewBox="0 0 13 13"><defs><linearGradient id="mailg" x1="0" y1="0" x2="0" y2="1"><stop offset="0" stop-color="#2058f0"/><stop offset="1" stop-color="#2cc0fa"/></linearGradient></defs><rect x="0" y="0" width="13" height="13" rx="3" fill="url(#mailg)"/><rect x="2.2" y="3.6" width="8.6" height="5.8" rx="0.4" fill="#f6f4f2"/><path d="M2.4 4 L6.5 7 L10.6 4 M2.4 9 L5.2 6.3 M10.6 9 L7.8 6.3" fill="none" stroke="#c9c2bd" stroke-width="0.5"/></svg><div class="pb" style="left:1420px;top:900px;color:#7d7d7d">Mail</div><svg class="ic" style="left:4px;top:2.6px" width="15" height="17.5" viewBox="0 0 170 200" preserveAspectRatio="none"><path fill="#fff" d="M150.4 68.2c-1 .8-19.6 11.3-19.6 34.6 0 27 23.7 36.5 24.4 36.7-.1.6-3.8 13.1-12.5 25.8-7.8 11.2-15.9 22.3-28.3 22.3s-15.6-7.2-29.9-7.2c-13.9 0-18.9 7.4-30.2 7.4s-19.3-10.4-28.3-23.2C15.6 149.7 7.4 126.2 7.4 104c0-35.7 23.2-54.6 46-54.6 12.1 0 22.2 8 29.9 8 7.3 0 18.7-8.4 32.5-8.4 5.2 0 24.1.5 36.6 18.2zM107.6 34.9c5.7-6.8 9.8-16.2 9.8-25.6 0-1.3-.1-2.6-.4-3.7-9.3.4-20.4 6.2-27 14-5.2 6-10.1 15.4-10.1 25 0 1.4.2 2.9.3 3.3.6.1 1.5.2 2.4.2 8.4 0 18.9-5.6 25-13.2z"/></svg><div class="abs" style="left:1842px;top:4px;width:16px;height:15.5px;background:#fff;border-top:4px solid #e3312b;box-shadow:0 0 0 0.5px #c02a25"><div style="position:absolute;left:0;top:-1px;width:16px;text-align:center;font-size:9px;line-height:12px;color:#111">28</div></div><svg class="ic" style="left:1875px;top:4.5px" width="28" height="15" viewBox="0 0 28 15"><rect x="0" y="0" width="2.6" height="7" rx="1" fill="#7b86c0"/><rect x="0" y="8" width="2.6" height="7" rx="1" fill="#7b86c0"/><rect x="4" y="0" width="2.6" height="7" rx="1" fill="#7b86c0"/><rect x="4" y="8" width="2.6" height="7" rx="1" fill="#7b86c0"/><rect x="8" y="0" width="2.6" height="7" rx="1" fill="#7b86c0"/><rect x="8" y="8" width="2.6" height="7" rx="1" fill="#7b86c0"/><rect x="12" y="0" width="2.6" height="7" rx="1" fill="#7b86c0"/><rect x="12" y="8" width="2.6" height="7" rx="1" fill="#7b86c0"/><rect x="16" y="0" width="2.6" height="7" rx="1" fill="#7b86c0"/><rect x="16" y="8" width="2.6" height="7" rx="1" fill="#7b86c0"/><rect x="20" y="0" width="2.6" height="7" rx="1" fill="#7b86c0"/><rect x="20" y="8" width="2.6" height="7" rx="1" fill="#7b86c0"/><rect x="24" y="0" width="2.6" height="7" rx="1" fill="#7b86c0"/><rect x="24" y="8" width="2.6" height="7" rx="1" fill="#7b86c0"/></svg><svg class="ic" style="left:1905px;top:6px" width="14" height="14" viewBox="0 0 14 14"><circle cx="7" cy="7" r="6" fill="none" stroke="#fff" stroke-width="1.1"/><path d="M4.2 7.3 L6.2 9.2 L9.8 4.8" fill="none" stroke="#fff" stroke-width="1.1" stroke-linecap="round" stroke-linejoin="round"/></svg><svg class="ic" style="left:1936px;top:5px" width="14" height="14" viewBox="0 0 14 14"><path d="M1.2 1 V12.7 H5.2 L8.3 7.4 L12.7 12.7 V1 H8.9 L5.8 5.8 Z" fill="none" stroke="#fff" stroke-width="1.3" stroke-linejoin="miter"/></svg><svg class="ic" style="left:1969px;top:3px" width="20" height="17" viewBox="0 0 20 17"><path d="M1.5 1.6 H18.5 V7.5 L11.5 13.6 H8.5 L1.5 7.5 Z" fill="none" stroke="#fff" stroke-width="1.5" stroke-linejoin="round"/><rect x="8" y="13.4" width="4.2" height="2.6" fill="#fff"/><path d="M5 5 Q5 3.3 7 3.3 Q8.8 3.3 10 5.3 Q11.2 3.3 13 3.3 Q15 3.3 15 5 Q15 7.8 10 10.8 Q5 7.8 5 5 Z" fill="none" stroke="#fff" stroke-width="1.3"/><path d="M7.8 5.2 L10 8.4 L12.6 4.6" fill="none" stroke="#fff" stroke-width="1.2"/></svg><svg class="ic" style="left:2003px;top:4px" width="18" height="16" viewBox="0 0 18 16"><path d="M5 4.5 Q5 0.3 9 0.3 Q13 0.3 13 4.5 Q13 8.5 9 9 Q5 8.5 5 4.5 Z" fill="#e9e9f2"/><rect x="2" y="5.2" width="14" height="1" rx="0.5" fill="#e9e9f2" opacity="0.8"/><path d="M1 15.8 Q1 12.3 2.5 11.2 Q4.5 9.8 6.5 9.5 L9 10.3 L11.5 9.5 Q13.5 9.8 15.5 11.2 Q17 12.3 17 15.8 Z" fill="#e9e9f2"/></svg><svg class="ic" style="left:2039px;top:6px" width="17" height="12" viewBox="0 0 17 12"><path d="M8.4 2.8 V9 M5.3 5.9 H11.5" stroke="#fff" stroke-width="1.5"/><path d="M1.3 1 V3 M1.3 8.5 V10.5 M15.2 1 V3 M15.2 8.5 V10.5" stroke="#fff" stroke-width="1.2"/></svg><div class="mi" style="left:2074px;font-size:12.5px;font-weight:bold">25%</div><svg class="ic" style="left:2103px;top:6px" width="26" height="12" viewBox="0 0 26 12"><rect x="0.6" y="0.6" width="22" height="10.8" rx="3" fill="none" stroke="#c9cdea" stroke-width="1"/><rect x="23.6" y="4" width="1.6" height="4" rx="0.8" fill="#c9cdea"/><path d="M3.5 2.5 H8.5 V6 Q8.5 8 6 8 Q3.5 8 3.5 6 Z M6 8 V11 M4.5 0.5 V2.5 M7.5 0.5 V2.5" fill="#fff" stroke="#fff" stroke-width="0.9"/><rect x="11" y="2.5" width="2.3" height="7" rx="0.8" fill="#fff"/><rect x="15" y="2.5" width="2.3" height="7" rx="0.8" fill="#fff"/></svg><svg class="ic" style="left:2147px;top:5.5px" width="16" height="14" viewBox="0 0 16 14"><defs><mask id="moonm"><rect width="16" height="14" fill="#fff"/><circle cx="12.3" cy="3.2" r="5.2" fill="#000"/></mask></defs><circle cx="7.6" cy="7" r="6.3" fill="#fff" mask="url(#moonm)"/></svg></div></body></html>
